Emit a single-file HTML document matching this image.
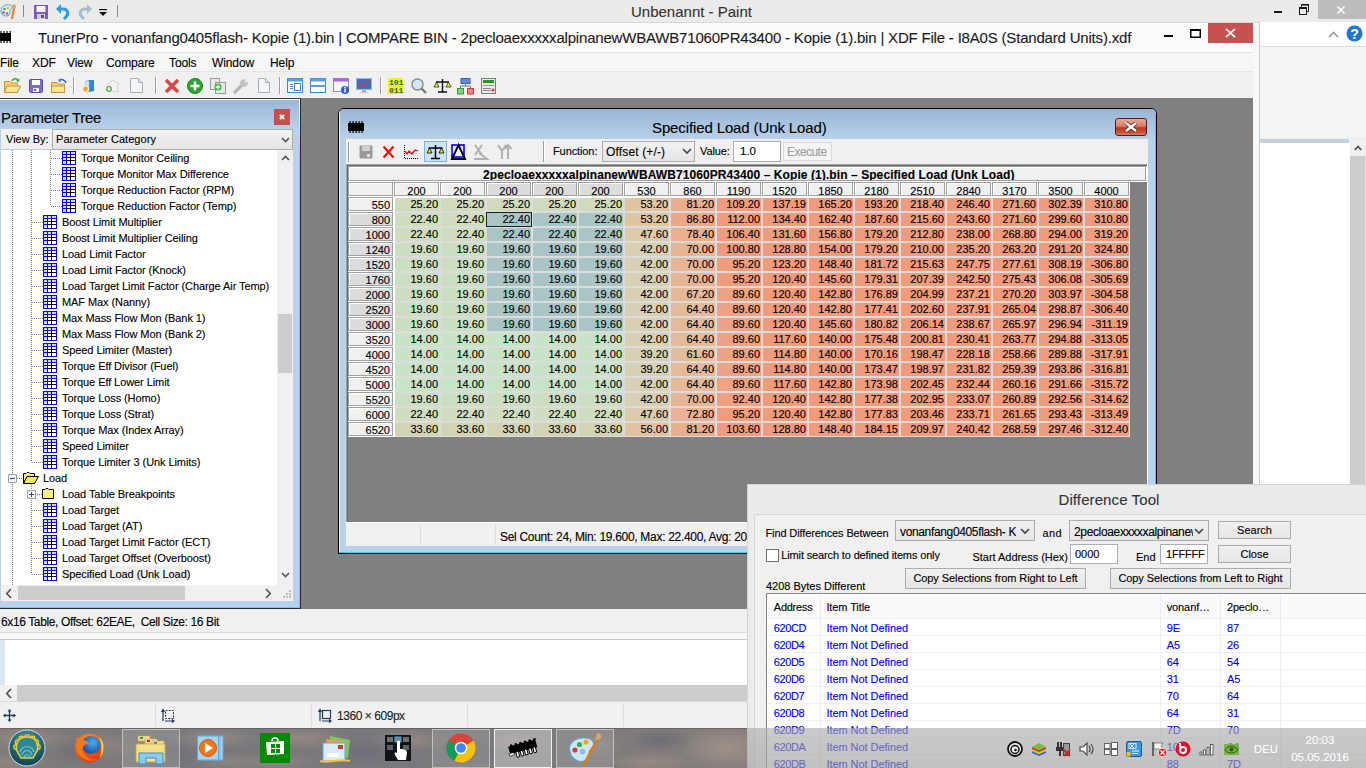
<!DOCTYPE html>
<html><head><meta charset="utf-8"><style>
html,body{margin:0;padding:0;width:1366px;height:768px;overflow:hidden;position:relative;background:#7d7775;font-family:"Liberation Sans",sans-serif;}
.a{position:absolute;}
.t{position:absolute;white-space:pre;line-height:1;-webkit-text-stroke:0.12px currentColor;}
svg{position:absolute;overflow:visible;}

</style></head><body>
<!-- paint -->
<div class="a" style="left:0px;top:0px;width:1366px;height:728px;background:#f0f0f0"></div><div class="a" style="left:0px;top:0px;width:1366px;height:22px;background:#ebebeb"></div><svg class="a" style="left:0px;top:2px;" width="17" height="17" viewBox="0 0 17 17">
      <path d="M1 9 C1 4 6 2 10 3 C13 4 12 7 10 8 C9 9 11 11 9 13 C7 15 1 14 1 9Z" fill="#dfeefa" stroke="#5a9fd4" stroke-width="1"/>
      <circle cx="4.5" cy="7" r="1.3" fill="#3fae49"/><circle cx="8" cy="6" r="1.3" fill="#f4b400"/>
      <circle cx="3.5" cy="10.5" r="1.3" fill="#e53935"/><circle cx="7" cy="11.5" r="1.2" fill="#3b7dd8"/>
      <path d="M12 17 L14 6" stroke="#e87b1f" stroke-width="2"/><circle cx="14" cy="4.5" r="2" fill="#d4a373"/></svg><div class="a" style="left:23px;top:5px;width:1px;height:12px;background:#8a8a8a"></div><svg class="a" style="left:34px;top:5px;" width="14" height="14" viewBox="0 0 14 14"><rect x="0" y="0" width="14" height="14" fill="#7b5bb5"/>
      <rect x="2.5" y="1" width="9" height="6" fill="#f4f4f8"/><rect x="3" y="9" width="8" height="5" fill="#d0d0d8"/><rect x="7" y="10" width="3" height="3" fill="#555"/></svg><svg class="a" style="left:56px;top:4px;" width="15" height="15" viewBox="0 0 15 15"><path d="M2 5 L7 5 C12 5 13 10 10 13 L8 15" fill="none" stroke="#2f9be3" stroke-width="3"/><path d="M0 5 L5 0 L5 10Z" fill="#2f9be3"/></svg><svg class="a" style="left:77px;top:4px;" width="15" height="15" viewBox="0 0 15 15"><path d="M13 5 L8 5 C3 5 2 10 5 13 L7 15" fill="none" stroke="#a9bccf" stroke-width="3"/><path d="M15 5 L10 0 L10 10Z" fill="#a9bccf"/></svg><svg class="a" style="left:99px;top:9px;" width="9" height="7" viewBox="0 0 9 7"><rect x="0" y="0" width="8" height="1.2" fill="#111"/><path d="M0 3 L8 3 L4 7Z" fill="#111"/></svg><div class="a" style="left:117px;top:5px;width:1px;height:12px;background:#8a8a8a"></div><div class="t" style="left:631px;top:4.30px;font-size:15px;color:#333;">Unbenannt - Paint</div><div class="a" style="left:1274px;top:11px;width:8px;height:2px;background:#1a1a1a"></div><svg class="a" style="left:1299px;top:4px;" width="10" height="11" viewBox="0 0 10 11"><rect x="0.5" y="3.5" width="7" height="7" fill="none" stroke="#1a1a1a"/><rect x="0" y="3" width="8" height="2" fill="#1a1a1a"/><path d="M2.5 3 V0.5 H9.5 V7.5 H8" fill="none" stroke="#1a1a1a"/><rect x="2" y="0" width="8" height="1.6" fill="#1a1a1a"/></svg><div class="a" style="left:1318px;top:0px;width:48px;height:19px;background:#bcbcbc"></div><svg class="a" style="left:1337px;top:6px;" width="8" height="8" viewBox="0 0 8 8"><path d="M0.5 0.5 L7.5 7.5 M7.5 0.5 L0.5 7.5" stroke="#fff" stroke-width="1.5"/></svg><div class="a" style="left:1260px;top:22px;width:106px;height:24px;background:#fff"></div><svg class="a" style="left:1328px;top:31px;" width="11" height="7" viewBox="0 0 11 7"><path d="M1 6 L5.5 1.5 L10 6" fill="none" stroke="#9a9a9a" stroke-width="1.6"/></svg><svg class="a" style="left:1346px;top:25px;" width="17" height="17" viewBox="0 0 17 17"><circle cx="8.5" cy="8.5" r="8" fill="#1e78d0"/><text x="8.5" y="13.5" font-size="14" font-weight="bold" text-anchor="middle" fill="#fff" font-family="Liberation Sans">?</text></svg><div class="a" style="left:1260px;top:46px;width:106px;height:1px;background:#dadbdc"></div><div class="a" style="left:1260px;top:47px;width:106px;height:91px;background:#f3f4f6"></div><div class="a" style="left:1260px;top:139px;width:89px;height:5px;background:#c5d0e0"></div><div class="a" style="left:1260px;top:143px;width:90px;height:489px;background:#fff"></div><div class="a" style="left:1350px;top:138px;width:16px;height:494px;background:#e8e8e8"></div><div class="a" style="left:1350px;top:139px;width:16px;height:17px;background:#f0f0f0"></div><svg class="a" style="left:1354px;top:145px;" width="8" height="6" viewBox="0 0 8 6"><path d="M0.8 5 L4 1.5 L7.2 5" fill="none" stroke="#505050" stroke-width="1.8"/></svg><div class="a" style="left:1350px;top:156px;width:15px;height:476px;background:#cdcdcd"></div><div class="a" style="left:0px;top:640px;width:1366px;height:45px;background:#fff"></div><div class="a" style="left:0px;top:640px;width:5px;height:45px;background:#dbe5f1"></div><div class="a" style="left:0px;top:685px;width:1366px;height:16px;background:#cdcdcd"></div><div class="a" style="left:0px;top:685px;width:17px;height:16px;background:#f0f0f0"></div><svg class="a" style="left:5px;top:688px;" width="8" height="11" viewBox="0 0 8 11"><path d="M6 1 L1.8 5.5 L6 10" fill="none" stroke="#555" stroke-width="1.8"/></svg><div class="a" style="left:0px;top:701px;width:1366px;height:27px;background:#f0f0f0"></div><div class="a" style="left:0px;top:701px;width:1366px;height:1px;background:#d9d9d9"></div><div class="a" style="left:155px;top:704px;width:1px;height:23px;background:#dcdcdc"></div><div class="a" style="left:311px;top:704px;width:1px;height:23px;background:#dcdcdc"></div><div class="a" style="left:467px;top:704px;width:1px;height:23px;background:#dcdcdc"></div><div class="a" style="left:623px;top:704px;width:1px;height:23px;background:#dcdcdc"></div><svg class="a" style="left:3px;top:709px;" width="13" height="13" viewBox="0 0 13 13"><path d="M6.5 1 V12 M1 6.5 H12" stroke="#1e3a5f" stroke-width="1.3"/><path d="M6.5 0 L4.5 2.5 H8.5Z M6.5 13 L4.5 10.5 H8.5Z M0 6.5 L2.5 4.5 V8.5Z M13 6.5 L10.5 4.5 V8.5Z" fill="#1e3a5f"/></svg><svg class="a" style="left:161px;top:709px;" width="14" height="13" viewBox="0 0 14 13"><path d="M2 12 V1 M0.5 3 L2 0.5 L3.5 3" stroke="#1e3a5f" stroke-width="1.2" fill="none"/><rect x="4.5" y="1.5" width="8" height="8" fill="none" stroke="#1e3a5f" stroke-dasharray="2 1.2"/><path d="M4 12 H13 M11 10.5 L13 12 L11 13.5" stroke="#1e3a5f" stroke-width="1.2" fill="none"/></svg><svg class="a" style="left:318px;top:709px;" width="14" height="13" viewBox="0 0 14 13"><path d="M2 12 V1 M0.5 3 L2 0.5 L3.5 3" stroke="#1e3a5f" stroke-width="1.2" fill="none"/><rect x="4.5" y="1.5" width="8" height="8" fill="none" stroke="#1e3a5f" stroke-width="1.2"/><path d="M4 12 H13 M11 10.5 L13 12 L11 13.5" stroke="#1e3a5f" stroke-width="1.2" fill="none"/></svg><div class="t" style="left:337px;top:709.84px;font-size:12px;color:#1e1e1e;letter-spacing:-0.45px">1360 × 609px</div>
<!-- tunerpro -->
<div class="a" style="left:0px;top:22px;width:1260px;height:618px;background:#f8f8f8;border-right:1px solid #c8c8c8;border-bottom:1px solid #c8c8c8;box-sizing:border-box"></div><div class="a" style="left:0px;top:22px;width:1253px;height:30px;background:#fcfcfc"></div><div class="a" style="left:0px;top:22px;width:1260px;height:1px;background:#d6d6d6"></div><svg class="a" style="left:0px;top:31px;" width="11" height="12" viewBox="0 0 11 12"><rect x="0" y="2" width="11" height="8" fill="#000"/><rect x="0.5" y="0" width="1.2" height="12" fill="#000"/><rect x="3.5" y="0" width="1.2" height="12" fill="#000"/><rect x="6.5" y="0" width="1.2" height="12" fill="#000"/><rect x="9.5" y="0" width="1.2" height="12" fill="#000"/></svg><div class="t" style="left:38px;top:30.30px;font-size:15px;color:#1b1b1b;letter-spacing:-0.19px">TunerPro - vonanfang0405flash- Kopie (1).bin | COMPARE BIN - 2pecloaexxxxxalpinanewWBAWB71060PR43400 - Kopie (1).bin | XDF File - I8A0S (Standard Units).xdf</div><div class="a" style="left:1164px;top:35px;width:9px;height:2px;background:#000"></div><svg class="a" style="left:1190px;top:29px;" width="11" height="9" viewBox="0 0 11 9"><rect x="0.75" y="0.75" width="9.5" height="7.5" fill="none" stroke="#000" stroke-width="1.5"/><rect x="0" y="0" width="11" height="2" fill="#000"/></svg><div class="a" style="left:1208px;top:23px;width:45px;height:20px;background:#c75050"></div><svg class="a" style="left:1225px;top:28px;" width="11" height="10" viewBox="0 0 11 10"><path d="M1 0.8 L10 9.2 M10 0.8 L1 9.2" stroke="#fff" stroke-width="1.7"/></svg><div class="a" style="left:0px;top:52px;width:1253px;height:19px;background:#f5f6f7;border-top:1px solid #e3e3e3;box-sizing:border-box"></div><div class="t" style="left:0px;top:56.84px;font-size:12px;color:#000;letter-spacing:-0.1px">File</div><div class="t" style="left:32px;top:56.84px;font-size:12px;color:#000;letter-spacing:-0.1px">XDF</div><div class="t" style="left:67px;top:56.84px;font-size:12px;color:#000;letter-spacing:-0.1px">View</div><div class="t" style="left:106px;top:56.84px;font-size:12px;color:#000;letter-spacing:-0.1px">Compare</div><div class="t" style="left:169px;top:56.84px;font-size:12px;color:#000;letter-spacing:-0.1px">Tools</div><div class="t" style="left:212px;top:56.84px;font-size:12px;color:#000;letter-spacing:-0.1px">Window</div><div class="t" style="left:270px;top:56.84px;font-size:12px;color:#000;letter-spacing:-0.1px">Help</div><div class="a" style="left:0px;top:71px;width:1253px;height:27px;background:#f0f0f0"></div><div class="a" style="left:0px;top:71px;width:1253px;height:1px;background:#e6e6e6"></div><div class="a" style="left:73px;top:77px;width:1px;height:17px;background:#a0a0a0"></div><div class="a" style="left:74px;top:77px;width:1px;height:17px;background:#fff"></div><div class="a" style="left:155px;top:77px;width:1px;height:17px;background:#a0a0a0"></div><div class="a" style="left:156px;top:77px;width:1px;height:17px;background:#fff"></div><div class="a" style="left:279px;top:77px;width:1px;height:17px;background:#a0a0a0"></div><div class="a" style="left:280px;top:77px;width:1px;height:17px;background:#fff"></div><div class="a" style="left:380px;top:77px;width:1px;height:17px;background:#a0a0a0"></div><div class="a" style="left:381px;top:77px;width:1px;height:17px;background:#fff"></div><svg class="a" style="left:4px;top:78px;" width="17" height="15" viewBox="0 0 17 15"><path d="M0.5 3.5 H6 L7.5 5 H13.5 V14.5 H0.5Z" fill="#f3d27a" stroke="#c9933a"/><path d="M0.5 14.5 L3 8 H16.5 L13.5 14.5Z" fill="#fbe39b" stroke="#c9933a"/><path d="M8 3 C9 0 13 0 14 2.5" fill="none" stroke="#3aa53a" stroke-width="1.6"/><path d="M15.5 0.5 L15 4 L12 3Z" fill="#3aa53a"/></svg><svg class="a" style="left:29px;top:79px;" width="14" height="14" viewBox="0 0 14 14"><rect x="0.5" y="0.5" width="13" height="13" rx="1" fill="#7d6dc9" stroke="#5b4aa5"/><rect x="3" y="1" width="8" height="5" fill="#fafafa"/><rect x="4" y="9" width="6" height="4" fill="#eee"/><rect x="5" y="10" width="2" height="2" fill="#666"/></svg><svg class="a" style="left:51px;top:78px;" width="17" height="15" viewBox="0 0 17 15"><path d="M0.5 4.5 H6 L7.5 6 H13.5 V14.5 H0.5Z" fill="#f3d27a" stroke="#c9933a"/><path d="M0.5 14.5 V8 H13.5 V14.5Z" fill="#fbe39b" stroke="#c9933a"/><path d="M15 5 C14 2 11 1 9 2" fill="none" stroke="#3a66c8" stroke-width="1.5"/><path d="M8 0 L10 4 L7.5 3.5Z" fill="#3a66c8"/></svg><svg class="a" style="left:82px;top:79px;" width="15" height="14" viewBox="0 0 15 14"><path d="M5 1 H12 V12 L7 13 V2Z" fill="#2e86d6"/><path d="M4 2 H7 V13 H4Z" fill="#dfe9f3" stroke="#9fb5cc" stroke-width="0.8"/><circle cx="3.5" cy="10" r="3" fill="#f6a623" stroke="#fff" stroke-width="0.8"/></svg><svg class="a" style="left:105px;top:79px;" width="15" height="14" viewBox="0 0 15 14"><path d="M3 5 L8 1 L14 5 L12 9 L14 12 L9 13 L3 9Z" fill="#f2f2f2" stroke="#cfcfcf"/><circle cx="4" cy="10" r="3" fill="#4bb84b"/><path d="M2 10 H6 M4 8 V12" stroke="#fff" stroke-width="1.2"/></svg><svg class="a" style="left:130px;top:78px;" width="13" height="15" viewBox="0 0 13 15"><path d="M0.5 0.5 H8.5 L12.5 4.5 V14.5 H0.5Z" fill="#f3f6fb" stroke="#a7adb8"/><path d="M8.5 0.5 V4.5 H12.5" fill="#dde3ec" stroke="#a7adb8"/></svg><svg class="a" style="left:164px;top:78px;" width="16" height="16" viewBox="0 0 16 16"><path d="M2 2 L14 14 M14 2 L2 14" stroke="#d9474a" stroke-width="3.6"/></svg><svg class="a" style="left:187px;top:78px;" width="16" height="16" viewBox="0 0 16 16"><circle cx="8" cy="8" r="7.5" fill="#2ea52e" stroke="#1c7d1c"/><path d="M3.5 8 H12.5 M8 3.5 V12.5" stroke="#fff" stroke-width="2.6"/></svg><svg class="a" style="left:210px;top:78px;" width="16" height="16" viewBox="0 0 16 16"><rect x="0.5" y="0.5" width="9" height="11" fill="#e8e8e8" stroke="#9a9a9a"/><rect x="5.5" y="4.5" width="10" height="11" fill="#e8e8e8" stroke="#9a9a9a"/><circle cx="8" cy="9" r="3.6" fill="#3db83d"/><path d="M5.8 9 H10.2 M8 6.8 V11.2" stroke="#fff" stroke-width="1.3"/></svg><svg class="a" style="left:233px;top:78px;" width="16" height="16" viewBox="0 0 16 16"><path d="M2 14 L9 7" stroke="#b5b5b5" stroke-width="3.2" stroke-linecap="round"/><circle cx="11" cy="5" r="3.8" fill="#c2c2c2"/><path d="M11 5 L14 0 L16 3Z" fill="#f0f0f0"/></svg><svg class="a" style="left:258px;top:78px;" width="12" height="15" viewBox="0 0 12 15"><path d="M0.5 0.5 H7.5 L11.5 4.5 V14.5 H0.5Z" fill="#f3f6fb" stroke="#a7adb8"/><path d="M7.5 0.5 V4.5 H11.5" fill="#dde3ec" stroke="#a7adb8"/></svg><svg class="a" style="left:287px;top:78px;" width="16" height="15" viewBox="0 0 16 15"><rect x="0.5" y="0.5" width="15" height="14" fill="#fff" stroke="#3d86cf"/><rect x="0.5" y="0.5" width="15" height="3" fill="#5aa0e0"/><rect x="3" y="6" width="3" height="1" fill="#3d86cf"/><rect x="3" y="8" width="3" height="1" fill="#3d86cf"/><rect x="3" y="10" width="3" height="1" fill="#3d86cf"/><rect x="7.5" y="5.5" width="6" height="7" fill="none" stroke="#3d86cf"/></svg><svg class="a" style="left:310px;top:78px;" width="16" height="15" viewBox="0 0 16 15"><rect x="0.5" y="0.5" width="15" height="14" fill="#fff" stroke="#3d86cf"/><rect x="0.5" y="0.5" width="15" height="3" fill="#5aa0e0"/><rect x="0.5" y="7" width="15" height="2" fill="#5aa0e0"/></svg><svg class="a" style="left:333px;top:78px;" width="17" height="16" viewBox="0 0 17 16"><rect x="0.5" y="0.5" width="15" height="13" fill="#f5f5fb" stroke="#8f8fa6"/><rect x="0.5" y="0.5" width="15" height="3" fill="#a36ae0"/><circle cx="12" cy="12" r="4" fill="#2c5fc9"/><rect x="11.3" y="10.5" width="1.5" height="4" fill="#fff"/><rect x="11.3" y="8.8" width="1.5" height="1.2" fill="#fff"/></svg><svg class="a" style="left:356px;top:78px;" width="16" height="16" viewBox="0 0 16 16"><rect x="0.5" y="0.5" width="15" height="11" fill="#3b6fc4" stroke="#9fb8d8"/><path d="M2 9 L6 6 L8 7 L13 3" stroke="#e53030" stroke-width="1.5" fill="none"/><rect x="6" y="12" width="4" height="2" fill="#aaa"/><rect x="4" y="14" width="8" height="1.2" fill="#ccc"/></svg><svg class="a" style="left:388px;top:78px;" width="16" height="16" viewBox="0 0 16 16"><rect x="0" y="0" width="15" height="16" fill="#f7ef1d"/><text x="1" y="7" font-size="8" font-weight="bold" fill="#1a6b5a" font-family="Liberation Mono">101</text><text x="1" y="15" font-size="8" font-weight="bold" fill="#1a6b5a" font-family="Liberation Mono">011</text></svg><svg class="a" style="left:411px;top:78px;" width="16" height="16" viewBox="0 0 16 16"><circle cx="6.5" cy="6.5" r="5.5" fill="#cfe8f7" stroke="#8a8a8a" stroke-width="1.4"/><path d="M10.5 10.5 L15 15" stroke="#7a7a7a" stroke-width="2.4"/></svg><svg class="a" style="left:434px;top:78px;" width="17" height="16" viewBox="0 0 17 16"><path d="M8.5 1 V14 M4 14 H13 M2 4 H15" stroke="#111" stroke-width="1.4"/><path d="M0 9 L2.5 4 L5 9Z" fill="#f0e040" stroke="#111" stroke-width="0.7"/><path d="M12 9 L14.5 4 L17 9Z" fill="#f0e040" stroke="#111" stroke-width="0.7"/></svg><svg class="a" style="left:457px;top:78px;" width="17" height="17" viewBox="0 0 17 17"><rect x="4" y="0.5" width="9" height="5" fill="#5b8de6" stroke="#3a5fb0"/><path d="M8.5 5.5 V8 M3.5 8 H13.5 M3.5 8 V10 M13.5 8 V10" stroke="#777" fill="none"/><rect x="0.5" y="10.5" width="6" height="5.5" fill="#7cd67c" stroke="#3c9c3c"/><rect x="10.5" y="10.5" width="6" height="5.5" fill="#f08080" stroke="#c04040"/></svg><svg class="a" style="left:481px;top:78px;" width="16" height="16" viewBox="0 0 16 16"><rect x="0.5" y="0.5" width="14" height="15" fill="#e9e9e9" stroke="#7a7a7a"/><rect x="2" y="2" width="11" height="3" fill="#2d8b3a"/><rect x="2" y="7" width="11" height="1" fill="#d48a2a"/><rect x="2" y="10" width="8" height="1" fill="#888"/><rect x="2" y="12" width="8" height="1" fill="#888"/><circle cx="12" cy="12" r="1.5" fill="#d33"/></svg><div class="a" style="left:0px;top:98px;width:1253px;height:511px;background:#808080"></div><div class="a" style="left:0px;top:609px;width:1253px;height:23px;background:#f0f0f0"></div><div class="a" style="left:0px;top:632px;width:1253px;height:1px;background:#dcdcdc"></div><div class="t" style="left:1px;top:615.84px;font-size:12px;color:#000;letter-spacing:-0.38px">6x16 Table, Offset: 62EAE,  Cell Size: 16 Bit</div>
<!-- tree -->
<div class="a" style="left:0px;top:98px;width:301px;height:511px;background:#b9d1ea"></div><div class="a" style="left:0px;top:98px;width:301px;height:1px;background:#3c3c3c"></div><div class="a" style="left:300px;top:98px;width:1px;height:511px;background:#2a2a2a"></div><div class="a" style="left:0px;top:608px;width:301px;height:1px;background:#2a2a2a"></div><div class="a" style="left:299px;top:99px;width:1px;height:509px;background:linear-gradient(#ffffff,#5ad4f4 60px,#5ad4f4)"></div><div class="a" style="left:0px;top:607px;width:300px;height:1px;background:#5ad4f4"></div><div class="a" style="left:0px;top:99px;width:299px;height:30px;background:linear-gradient(#9ab6d5,#b9d1ea)"></div><div class="a" style="left:0px;top:99px;width:299px;height:1px;background:#fff"></div><div class="t" style="left:1px;top:109.80px;font-size:15px;color:#000;letter-spacing:-0.3px">Parameter Tree</div><div class="a" style="left:274px;top:109px;width:16px;height:16px;background:#c84f4f"></div><svg class="a" style="left:279px;top:114px;" width="6" height="6" viewBox="0 0 6 6"><path d="M0.8 0.8 L5.2 5.2 M5.2 0.8 L0.8 5.2" stroke="#fff" stroke-width="1.7"/></svg><div class="a" style="left:1px;top:129px;width:51px;height:20px;background:#f0f0f0"></div><div class="t" style="left:6px;top:133.69px;font-size:11px;color:#000;letter-spacing:0px">View By:</div><div class="a" style="left:52px;top:129px;width:241px;height:21px;background:linear-gradient(#f2f2f2,#e5e5e5);border:1px solid #acacac;box-sizing:border-box"></div><div class="t" style="left:56px;top:134.19px;font-size:11px;color:#000;letter-spacing:0.05px">Parameter Category</div><svg class="a" style="left:281px;top:137px;" width="9" height="6" viewBox="0 0 9 6"><path d="M1 1 L4.5 4.5 L8 1" fill="none" stroke="#555" stroke-width="1.6"/></svg><div class="a" style="left:1px;top:150px;width:276px;height:435px;background:#fff"></div><div class="a" style="left:12px;top:150px;width:1px;height:435px;background-image:linear-gradient(#808080 50%,transparent 50%);background-size:1px 2px"></div><div class="a" style="left:31px;top:150px;width:1px;height:312px;background-image:linear-gradient(#808080 50%,transparent 50%);background-size:1px 2px"></div><div class="a" style="left:31px;top:484px;width:1px;height:90px;background-image:linear-gradient(#808080 50%,transparent 50%);background-size:1px 2px"></div><div class="a" style="left:50px;top:150px;width:1px;height:56px;background-image:linear-gradient(#808080 50%,transparent 50%);background-size:1px 2px"></div><div class="a" style="left:51px;top:158px;width:11px;height:1px;background-image:linear-gradient(90deg,#808080 50%,transparent 50%);background-size:2px 1px"></div><svg class="a" style="left:62px;top:151px;" width="14" height="14" viewBox="0 0 14 14"><g shape-rendering="crispEdges"><rect x="0" y="0" width="14" height="14" fill="#0000ff"/><rect x="1" y="1" width="3" height="2" fill="#d4d1c4"/><rect x="5" y="1" width="3" height="2" fill="#d4d1c4"/><rect x="9" y="1" width="4" height="2" fill="#d4d1c4"/><rect x="1" y="4" width="3" height="2" fill="#d4d1c4"/><rect x="1" y="7" width="3" height="2" fill="#d4d1c4"/><rect x="1" y="10" width="3" height="3" fill="#d4d1c4"/><rect x="5" y="4" width="8" height="9" fill="#fff"/><rect x="8" y="4" width="1" height="9" fill="#000"/><rect x="5" y="6" width="8" height="1" fill="#000"/><rect x="5" y="9" width="8" height="1" fill="#000"/></g></svg><div class="t" style="left:81px;top:152.69px;font-size:11px;color:#000;letter-spacing:-0.08px">Torque Monitor Ceiling</div><div class="a" style="left:51px;top:174px;width:11px;height:1px;background-image:linear-gradient(90deg,#808080 50%,transparent 50%);background-size:2px 1px"></div><svg class="a" style="left:62px;top:167px;" width="14" height="14" viewBox="0 0 14 14"><g shape-rendering="crispEdges"><rect x="0" y="0" width="14" height="14" fill="#0000ff"/><rect x="1" y="1" width="3" height="2" fill="#d4d1c4"/><rect x="5" y="1" width="3" height="2" fill="#d4d1c4"/><rect x="9" y="1" width="4" height="2" fill="#d4d1c4"/><rect x="1" y="4" width="3" height="2" fill="#d4d1c4"/><rect x="1" y="7" width="3" height="2" fill="#d4d1c4"/><rect x="1" y="10" width="3" height="3" fill="#d4d1c4"/><rect x="5" y="4" width="8" height="9" fill="#fff"/><rect x="8" y="4" width="1" height="9" fill="#000"/><rect x="5" y="6" width="8" height="1" fill="#000"/><rect x="5" y="9" width="8" height="1" fill="#000"/></g></svg><div class="t" style="left:81px;top:168.69px;font-size:11px;color:#000;letter-spacing:-0.08px">Torque Monitor Max Difference</div><div class="a" style="left:51px;top:190px;width:11px;height:1px;background-image:linear-gradient(90deg,#808080 50%,transparent 50%);background-size:2px 1px"></div><svg class="a" style="left:62px;top:183px;" width="14" height="14" viewBox="0 0 14 14"><g shape-rendering="crispEdges"><rect x="0" y="0" width="14" height="14" fill="#0000ff"/><rect x="1" y="1" width="3" height="2" fill="#d4d1c4"/><rect x="5" y="1" width="3" height="2" fill="#d4d1c4"/><rect x="9" y="1" width="4" height="2" fill="#d4d1c4"/><rect x="1" y="4" width="3" height="2" fill="#d4d1c4"/><rect x="1" y="7" width="3" height="2" fill="#d4d1c4"/><rect x="1" y="10" width="3" height="3" fill="#d4d1c4"/><rect x="5" y="4" width="8" height="9" fill="#fff"/><rect x="8" y="4" width="1" height="9" fill="#000"/><rect x="5" y="6" width="8" height="1" fill="#000"/><rect x="5" y="9" width="8" height="1" fill="#000"/></g></svg><div class="t" style="left:81px;top:184.69px;font-size:11px;color:#000;letter-spacing:-0.08px">Torque Reduction Factor (RPM)</div><div class="a" style="left:51px;top:206px;width:11px;height:1px;background-image:linear-gradient(90deg,#808080 50%,transparent 50%);background-size:2px 1px"></div><svg class="a" style="left:62px;top:199px;" width="14" height="14" viewBox="0 0 14 14"><g shape-rendering="crispEdges"><rect x="0" y="0" width="14" height="14" fill="#0000ff"/><rect x="1" y="1" width="3" height="2" fill="#d4d1c4"/><rect x="5" y="1" width="3" height="2" fill="#d4d1c4"/><rect x="9" y="1" width="4" height="2" fill="#d4d1c4"/><rect x="1" y="4" width="3" height="2" fill="#d4d1c4"/><rect x="1" y="7" width="3" height="2" fill="#d4d1c4"/><rect x="1" y="10" width="3" height="3" fill="#d4d1c4"/><rect x="5" y="4" width="8" height="9" fill="#fff"/><rect x="8" y="4" width="1" height="9" fill="#000"/><rect x="5" y="6" width="8" height="1" fill="#000"/><rect x="5" y="9" width="8" height="1" fill="#000"/></g></svg><div class="t" style="left:81px;top:200.69px;font-size:11px;color:#000;letter-spacing:-0.08px">Torque Reduction Factor (Temp)</div><div class="a" style="left:32px;top:222px;width:11px;height:1px;background-image:linear-gradient(90deg,#808080 50%,transparent 50%);background-size:2px 1px"></div><svg class="a" style="left:43px;top:215px;" width="14" height="14" viewBox="0 0 14 14"><g shape-rendering="crispEdges"><rect x="0" y="0" width="14" height="14" fill="#0000ff"/><rect x="1" y="1" width="3" height="2" fill="#d4d1c4"/><rect x="5" y="1" width="3" height="2" fill="#d4d1c4"/><rect x="9" y="1" width="4" height="2" fill="#d4d1c4"/><rect x="1" y="4" width="3" height="2" fill="#d4d1c4"/><rect x="1" y="7" width="3" height="2" fill="#d4d1c4"/><rect x="1" y="10" width="3" height="3" fill="#d4d1c4"/><rect x="5" y="4" width="8" height="9" fill="#fff"/><rect x="8" y="4" width="1" height="9" fill="#000"/><rect x="5" y="6" width="8" height="1" fill="#000"/><rect x="5" y="9" width="8" height="1" fill="#000"/></g></svg><div class="t" style="left:62px;top:216.69px;font-size:11px;color:#000;letter-spacing:-0.08px">Boost Limit Multiplier</div><div class="a" style="left:32px;top:238px;width:11px;height:1px;background-image:linear-gradient(90deg,#808080 50%,transparent 50%);background-size:2px 1px"></div><svg class="a" style="left:43px;top:231px;" width="14" height="14" viewBox="0 0 14 14"><g shape-rendering="crispEdges"><rect x="0" y="0" width="14" height="14" fill="#0000ff"/><rect x="1" y="1" width="3" height="2" fill="#d4d1c4"/><rect x="5" y="1" width="3" height="2" fill="#d4d1c4"/><rect x="9" y="1" width="4" height="2" fill="#d4d1c4"/><rect x="1" y="4" width="3" height="2" fill="#d4d1c4"/><rect x="1" y="7" width="3" height="2" fill="#d4d1c4"/><rect x="1" y="10" width="3" height="3" fill="#d4d1c4"/><rect x="5" y="4" width="8" height="9" fill="#fff"/><rect x="8" y="4" width="1" height="9" fill="#000"/><rect x="5" y="6" width="8" height="1" fill="#000"/><rect x="5" y="9" width="8" height="1" fill="#000"/></g></svg><div class="t" style="left:62px;top:232.69px;font-size:11px;color:#000;letter-spacing:-0.08px">Boost Limit Multiplier Ceiling</div><div class="a" style="left:32px;top:254px;width:11px;height:1px;background-image:linear-gradient(90deg,#808080 50%,transparent 50%);background-size:2px 1px"></div><svg class="a" style="left:43px;top:247px;" width="14" height="14" viewBox="0 0 14 14"><g shape-rendering="crispEdges"><rect x="0" y="0" width="14" height="14" fill="#0000ff"/><rect x="1" y="1" width="3" height="2" fill="#d4d1c4"/><rect x="5" y="1" width="3" height="2" fill="#d4d1c4"/><rect x="9" y="1" width="4" height="2" fill="#d4d1c4"/><rect x="1" y="4" width="3" height="2" fill="#d4d1c4"/><rect x="1" y="7" width="3" height="2" fill="#d4d1c4"/><rect x="1" y="10" width="3" height="3" fill="#d4d1c4"/><rect x="5" y="4" width="8" height="9" fill="#fff"/><rect x="8" y="4" width="1" height="9" fill="#000"/><rect x="5" y="6" width="8" height="1" fill="#000"/><rect x="5" y="9" width="8" height="1" fill="#000"/></g></svg><div class="t" style="left:62px;top:248.69px;font-size:11px;color:#000;letter-spacing:-0.08px">Load Limit Factor</div><div class="a" style="left:32px;top:270px;width:11px;height:1px;background-image:linear-gradient(90deg,#808080 50%,transparent 50%);background-size:2px 1px"></div><svg class="a" style="left:43px;top:263px;" width="14" height="14" viewBox="0 0 14 14"><g shape-rendering="crispEdges"><rect x="0" y="0" width="14" height="14" fill="#0000ff"/><rect x="1" y="1" width="3" height="2" fill="#d4d1c4"/><rect x="5" y="1" width="3" height="2" fill="#d4d1c4"/><rect x="9" y="1" width="4" height="2" fill="#d4d1c4"/><rect x="1" y="4" width="3" height="2" fill="#d4d1c4"/><rect x="1" y="7" width="3" height="2" fill="#d4d1c4"/><rect x="1" y="10" width="3" height="3" fill="#d4d1c4"/><rect x="5" y="4" width="8" height="9" fill="#fff"/><rect x="8" y="4" width="1" height="9" fill="#000"/><rect x="5" y="6" width="8" height="1" fill="#000"/><rect x="5" y="9" width="8" height="1" fill="#000"/></g></svg><div class="t" style="left:62px;top:264.69px;font-size:11px;color:#000;letter-spacing:-0.08px">Load Limit Factor (Knock)</div><div class="a" style="left:32px;top:286px;width:11px;height:1px;background-image:linear-gradient(90deg,#808080 50%,transparent 50%);background-size:2px 1px"></div><svg class="a" style="left:43px;top:279px;" width="14" height="14" viewBox="0 0 14 14"><g shape-rendering="crispEdges"><rect x="0" y="0" width="14" height="14" fill="#0000ff"/><rect x="1" y="1" width="3" height="2" fill="#d4d1c4"/><rect x="5" y="1" width="3" height="2" fill="#d4d1c4"/><rect x="9" y="1" width="4" height="2" fill="#d4d1c4"/><rect x="1" y="4" width="3" height="2" fill="#d4d1c4"/><rect x="1" y="7" width="3" height="2" fill="#d4d1c4"/><rect x="1" y="10" width="3" height="3" fill="#d4d1c4"/><rect x="5" y="4" width="8" height="9" fill="#fff"/><rect x="8" y="4" width="1" height="9" fill="#000"/><rect x="5" y="6" width="8" height="1" fill="#000"/><rect x="5" y="9" width="8" height="1" fill="#000"/></g></svg><div class="t" style="left:62px;top:280.69px;font-size:11px;color:#000;letter-spacing:-0.08px">Load Target Limit Factor (Charge Air Temp)</div><div class="a" style="left:32px;top:302px;width:11px;height:1px;background-image:linear-gradient(90deg,#808080 50%,transparent 50%);background-size:2px 1px"></div><svg class="a" style="left:43px;top:295px;" width="14" height="14" viewBox="0 0 14 14"><g shape-rendering="crispEdges"><rect x="0" y="0" width="14" height="14" fill="#0000ff"/><rect x="1" y="1" width="3" height="2" fill="#d4d1c4"/><rect x="5" y="1" width="3" height="2" fill="#d4d1c4"/><rect x="9" y="1" width="4" height="2" fill="#d4d1c4"/><rect x="1" y="4" width="3" height="2" fill="#d4d1c4"/><rect x="1" y="7" width="3" height="2" fill="#d4d1c4"/><rect x="1" y="10" width="3" height="3" fill="#d4d1c4"/><rect x="5" y="4" width="8" height="9" fill="#fff"/><rect x="8" y="4" width="1" height="9" fill="#000"/><rect x="5" y="6" width="8" height="1" fill="#000"/><rect x="5" y="9" width="8" height="1" fill="#000"/></g></svg><div class="t" style="left:62px;top:296.69px;font-size:11px;color:#000;letter-spacing:-0.08px">MAF Max (Nanny)</div><div class="a" style="left:32px;top:318px;width:11px;height:1px;background-image:linear-gradient(90deg,#808080 50%,transparent 50%);background-size:2px 1px"></div><svg class="a" style="left:43px;top:311px;" width="14" height="14" viewBox="0 0 14 14"><g shape-rendering="crispEdges"><rect x="0" y="0" width="14" height="14" fill="#0000ff"/><rect x="1" y="1" width="3" height="2" fill="#d4d1c4"/><rect x="5" y="1" width="3" height="2" fill="#d4d1c4"/><rect x="9" y="1" width="4" height="2" fill="#d4d1c4"/><rect x="1" y="4" width="3" height="2" fill="#d4d1c4"/><rect x="1" y="7" width="3" height="2" fill="#d4d1c4"/><rect x="1" y="10" width="3" height="3" fill="#d4d1c4"/><rect x="5" y="4" width="8" height="9" fill="#fff"/><rect x="8" y="4" width="1" height="9" fill="#000"/><rect x="5" y="6" width="8" height="1" fill="#000"/><rect x="5" y="9" width="8" height="1" fill="#000"/></g></svg><div class="t" style="left:62px;top:312.69px;font-size:11px;color:#000;letter-spacing:-0.08px">Max Mass Flow Mon (Bank 1)</div><div class="a" style="left:32px;top:334px;width:11px;height:1px;background-image:linear-gradient(90deg,#808080 50%,transparent 50%);background-size:2px 1px"></div><svg class="a" style="left:43px;top:327px;" width="14" height="14" viewBox="0 0 14 14"><g shape-rendering="crispEdges"><rect x="0" y="0" width="14" height="14" fill="#0000ff"/><rect x="1" y="1" width="3" height="2" fill="#d4d1c4"/><rect x="5" y="1" width="3" height="2" fill="#d4d1c4"/><rect x="9" y="1" width="4" height="2" fill="#d4d1c4"/><rect x="1" y="4" width="3" height="2" fill="#d4d1c4"/><rect x="1" y="7" width="3" height="2" fill="#d4d1c4"/><rect x="1" y="10" width="3" height="3" fill="#d4d1c4"/><rect x="5" y="4" width="8" height="9" fill="#fff"/><rect x="8" y="4" width="1" height="9" fill="#000"/><rect x="5" y="6" width="8" height="1" fill="#000"/><rect x="5" y="9" width="8" height="1" fill="#000"/></g></svg><div class="t" style="left:62px;top:328.69px;font-size:11px;color:#000;letter-spacing:-0.08px">Max Mass Flow Mon (Bank 2)</div><div class="a" style="left:32px;top:350px;width:11px;height:1px;background-image:linear-gradient(90deg,#808080 50%,transparent 50%);background-size:2px 1px"></div><svg class="a" style="left:43px;top:343px;" width="14" height="14" viewBox="0 0 14 14"><g shape-rendering="crispEdges"><rect x="0" y="0" width="14" height="14" fill="#0000ff"/><rect x="1" y="1" width="3" height="2" fill="#d4d1c4"/><rect x="5" y="1" width="3" height="2" fill="#d4d1c4"/><rect x="9" y="1" width="4" height="2" fill="#d4d1c4"/><rect x="1" y="4" width="3" height="2" fill="#d4d1c4"/><rect x="1" y="7" width="3" height="2" fill="#d4d1c4"/><rect x="1" y="10" width="3" height="3" fill="#d4d1c4"/><rect x="5" y="4" width="8" height="9" fill="#fff"/><rect x="8" y="4" width="1" height="9" fill="#000"/><rect x="5" y="6" width="8" height="1" fill="#000"/><rect x="5" y="9" width="8" height="1" fill="#000"/></g></svg><div class="t" style="left:62px;top:344.69px;font-size:11px;color:#000;letter-spacing:-0.08px">Speed Limiter (Master)</div><div class="a" style="left:32px;top:366px;width:11px;height:1px;background-image:linear-gradient(90deg,#808080 50%,transparent 50%);background-size:2px 1px"></div><svg class="a" style="left:43px;top:359px;" width="14" height="14" viewBox="0 0 14 14"><g shape-rendering="crispEdges"><rect x="0" y="0" width="14" height="14" fill="#0000ff"/><rect x="1" y="1" width="3" height="2" fill="#d4d1c4"/><rect x="5" y="1" width="3" height="2" fill="#d4d1c4"/><rect x="9" y="1" width="4" height="2" fill="#d4d1c4"/><rect x="1" y="4" width="3" height="2" fill="#d4d1c4"/><rect x="1" y="7" width="3" height="2" fill="#d4d1c4"/><rect x="1" y="10" width="3" height="3" fill="#d4d1c4"/><rect x="5" y="4" width="8" height="9" fill="#fff"/><rect x="8" y="4" width="1" height="9" fill="#000"/><rect x="5" y="6" width="8" height="1" fill="#000"/><rect x="5" y="9" width="8" height="1" fill="#000"/></g></svg><div class="t" style="left:62px;top:360.69px;font-size:11px;color:#000;letter-spacing:-0.08px">Torque Eff Divisor (Fuel)</div><div class="a" style="left:32px;top:382px;width:11px;height:1px;background-image:linear-gradient(90deg,#808080 50%,transparent 50%);background-size:2px 1px"></div><svg class="a" style="left:43px;top:375px;" width="14" height="14" viewBox="0 0 14 14"><g shape-rendering="crispEdges"><rect x="0" y="0" width="14" height="14" fill="#0000ff"/><rect x="1" y="1" width="3" height="2" fill="#d4d1c4"/><rect x="5" y="1" width="3" height="2" fill="#d4d1c4"/><rect x="9" y="1" width="4" height="2" fill="#d4d1c4"/><rect x="1" y="4" width="3" height="2" fill="#d4d1c4"/><rect x="1" y="7" width="3" height="2" fill="#d4d1c4"/><rect x="1" y="10" width="3" height="3" fill="#d4d1c4"/><rect x="5" y="4" width="8" height="9" fill="#fff"/><rect x="8" y="4" width="1" height="9" fill="#000"/><rect x="5" y="6" width="8" height="1" fill="#000"/><rect x="5" y="9" width="8" height="1" fill="#000"/></g></svg><div class="t" style="left:62px;top:376.69px;font-size:11px;color:#000;letter-spacing:-0.08px">Torque Eff Lower Limit</div><div class="a" style="left:32px;top:398px;width:11px;height:1px;background-image:linear-gradient(90deg,#808080 50%,transparent 50%);background-size:2px 1px"></div><svg class="a" style="left:43px;top:391px;" width="14" height="14" viewBox="0 0 14 14"><g shape-rendering="crispEdges"><rect x="0" y="0" width="14" height="14" fill="#0000ff"/><rect x="1" y="1" width="3" height="2" fill="#d4d1c4"/><rect x="5" y="1" width="3" height="2" fill="#d4d1c4"/><rect x="9" y="1" width="4" height="2" fill="#d4d1c4"/><rect x="1" y="4" width="3" height="2" fill="#d4d1c4"/><rect x="1" y="7" width="3" height="2" fill="#d4d1c4"/><rect x="1" y="10" width="3" height="3" fill="#d4d1c4"/><rect x="5" y="4" width="8" height="9" fill="#fff"/><rect x="8" y="4" width="1" height="9" fill="#000"/><rect x="5" y="6" width="8" height="1" fill="#000"/><rect x="5" y="9" width="8" height="1" fill="#000"/></g></svg><div class="t" style="left:62px;top:392.69px;font-size:11px;color:#000;letter-spacing:-0.08px">Torque Loss (Homo)</div><div class="a" style="left:32px;top:414px;width:11px;height:1px;background-image:linear-gradient(90deg,#808080 50%,transparent 50%);background-size:2px 1px"></div><svg class="a" style="left:43px;top:407px;" width="14" height="14" viewBox="0 0 14 14"><g shape-rendering="crispEdges"><rect x="0" y="0" width="14" height="14" fill="#0000ff"/><rect x="1" y="1" width="3" height="2" fill="#d4d1c4"/><rect x="5" y="1" width="3" height="2" fill="#d4d1c4"/><rect x="9" y="1" width="4" height="2" fill="#d4d1c4"/><rect x="1" y="4" width="3" height="2" fill="#d4d1c4"/><rect x="1" y="7" width="3" height="2" fill="#d4d1c4"/><rect x="1" y="10" width="3" height="3" fill="#d4d1c4"/><rect x="5" y="4" width="8" height="9" fill="#fff"/><rect x="8" y="4" width="1" height="9" fill="#000"/><rect x="5" y="6" width="8" height="1" fill="#000"/><rect x="5" y="9" width="8" height="1" fill="#000"/></g></svg><div class="t" style="left:62px;top:408.69px;font-size:11px;color:#000;letter-spacing:-0.08px">Torque Loss (Strat)</div><div class="a" style="left:32px;top:430px;width:11px;height:1px;background-image:linear-gradient(90deg,#808080 50%,transparent 50%);background-size:2px 1px"></div><svg class="a" style="left:43px;top:423px;" width="14" height="14" viewBox="0 0 14 14"><g shape-rendering="crispEdges"><rect x="0" y="0" width="14" height="14" fill="#0000ff"/><rect x="1" y="1" width="3" height="2" fill="#d4d1c4"/><rect x="5" y="1" width="3" height="2" fill="#d4d1c4"/><rect x="9" y="1" width="4" height="2" fill="#d4d1c4"/><rect x="1" y="4" width="3" height="2" fill="#d4d1c4"/><rect x="1" y="7" width="3" height="2" fill="#d4d1c4"/><rect x="1" y="10" width="3" height="3" fill="#d4d1c4"/><rect x="5" y="4" width="8" height="9" fill="#fff"/><rect x="8" y="4" width="1" height="9" fill="#000"/><rect x="5" y="6" width="8" height="1" fill="#000"/><rect x="5" y="9" width="8" height="1" fill="#000"/></g></svg><div class="t" style="left:62px;top:424.69px;font-size:11px;color:#000;letter-spacing:-0.08px">Torque Max (Index Array)</div><div class="a" style="left:32px;top:446px;width:11px;height:1px;background-image:linear-gradient(90deg,#808080 50%,transparent 50%);background-size:2px 1px"></div><svg class="a" style="left:43px;top:439px;" width="14" height="14" viewBox="0 0 14 14"><g shape-rendering="crispEdges"><rect x="0" y="0" width="14" height="14" fill="#0000ff"/><rect x="1" y="1" width="3" height="2" fill="#d4d1c4"/><rect x="5" y="1" width="3" height="2" fill="#d4d1c4"/><rect x="9" y="1" width="4" height="2" fill="#d4d1c4"/><rect x="1" y="4" width="3" height="2" fill="#d4d1c4"/><rect x="1" y="7" width="3" height="2" fill="#d4d1c4"/><rect x="1" y="10" width="3" height="3" fill="#d4d1c4"/><rect x="5" y="4" width="8" height="9" fill="#fff"/><rect x="8" y="4" width="1" height="9" fill="#000"/><rect x="5" y="6" width="8" height="1" fill="#000"/><rect x="5" y="9" width="8" height="1" fill="#000"/></g></svg><div class="t" style="left:62px;top:440.69px;font-size:11px;color:#000;letter-spacing:-0.08px">Speed Limiter</div><div class="a" style="left:32px;top:462px;width:11px;height:1px;background-image:linear-gradient(90deg,#808080 50%,transparent 50%);background-size:2px 1px"></div><svg class="a" style="left:43px;top:455px;" width="14" height="14" viewBox="0 0 14 14"><g shape-rendering="crispEdges"><rect x="0" y="0" width="14" height="14" fill="#0000ff"/><rect x="1" y="1" width="3" height="2" fill="#d4d1c4"/><rect x="5" y="1" width="3" height="2" fill="#d4d1c4"/><rect x="9" y="1" width="4" height="2" fill="#d4d1c4"/><rect x="1" y="4" width="3" height="2" fill="#d4d1c4"/><rect x="1" y="7" width="3" height="2" fill="#d4d1c4"/><rect x="1" y="10" width="3" height="3" fill="#d4d1c4"/><rect x="5" y="4" width="8" height="9" fill="#fff"/><rect x="8" y="4" width="1" height="9" fill="#000"/><rect x="5" y="6" width="8" height="1" fill="#000"/><rect x="5" y="9" width="8" height="1" fill="#000"/></g></svg><div class="t" style="left:62px;top:456.69px;font-size:11px;color:#000;letter-spacing:-0.08px">Torque Limiter 3 (Unk Limits)</div><div class="a" style="left:17px;top:478px;width:6px;height:1px;background-image:linear-gradient(90deg,#808080 50%,transparent 50%);background-size:2px 1px"></div><div class="a" style="left:8px;top:474px;width:9px;height:9px;background:#f4f4f4;border:1px solid #a0a0a0;box-sizing:border-box;border-radius:1px"></div><svg class="a" style="left:8px;top:474px;" width="9" height="9" viewBox="0 0 9 9"><path d="M2 4.5 H7" stroke="#2850a0" stroke-width="1"/></svg><svg class="a" style="left:23px;top:472px;" width="16" height="12" viewBox="0 0 16 12"><path d="M0.5 1.5 H3 L4 0.5 H6 L7 1.5 H11.5 V4.5 H4.5 L0.5 11.5Z" fill="#f5f07a" stroke="#000"/><path d="M0.5 11.5 L4 4.5 H15.5 L11.5 11.5Z" fill="#f0e860" stroke="#000"/></svg><div class="t" style="left:43px;top:472.69px;font-size:11px;color:#000;letter-spacing:-0.08px">Load</div><div class="a" style="left:37px;top:494px;width:6px;height:1px;background-image:linear-gradient(90deg,#808080 50%,transparent 50%);background-size:2px 1px"></div><div class="a" style="left:27px;top:490px;width:9px;height:9px;background:#f4f4f4;border:1px solid #a0a0a0;box-sizing:border-box;border-radius:1px"></div><svg class="a" style="left:27px;top:490px;" width="9" height="9" viewBox="0 0 9 9"><path d="M2 4.5 H7 M4.5 2 V7" stroke="#2850a0" stroke-width="1"/></svg><svg class="a" style="left:42px;top:488px;" width="12" height="11" viewBox="0 0 12 11"><path d="M0.5 1.5 H3 L4 0.5 H6 L7 1.5 H11.5 V10.5 H0.5Z" fill="#f5f07a" stroke="#000"/></svg><div class="t" style="left:62px;top:488.69px;font-size:11px;color:#000;letter-spacing:-0.08px">Load Table Breakpoints</div><div class="a" style="left:32px;top:510px;width:11px;height:1px;background-image:linear-gradient(90deg,#808080 50%,transparent 50%);background-size:2px 1px"></div><svg class="a" style="left:43px;top:503px;" width="14" height="14" viewBox="0 0 14 14"><g shape-rendering="crispEdges"><rect x="0" y="0" width="14" height="14" fill="#0000ff"/><rect x="1" y="1" width="3" height="2" fill="#d4d1c4"/><rect x="5" y="1" width="3" height="2" fill="#d4d1c4"/><rect x="9" y="1" width="4" height="2" fill="#d4d1c4"/><rect x="1" y="4" width="3" height="2" fill="#d4d1c4"/><rect x="1" y="7" width="3" height="2" fill="#d4d1c4"/><rect x="1" y="10" width="3" height="3" fill="#d4d1c4"/><rect x="5" y="4" width="8" height="9" fill="#fff"/><rect x="8" y="4" width="1" height="9" fill="#000"/><rect x="5" y="6" width="8" height="1" fill="#000"/><rect x="5" y="9" width="8" height="1" fill="#000"/></g></svg><div class="t" style="left:62px;top:504.69px;font-size:11px;color:#000;letter-spacing:-0.08px">Load Target</div><div class="a" style="left:32px;top:526px;width:11px;height:1px;background-image:linear-gradient(90deg,#808080 50%,transparent 50%);background-size:2px 1px"></div><svg class="a" style="left:43px;top:519px;" width="14" height="14" viewBox="0 0 14 14"><g shape-rendering="crispEdges"><rect x="0" y="0" width="14" height="14" fill="#0000ff"/><rect x="1" y="1" width="3" height="2" fill="#d4d1c4"/><rect x="5" y="1" width="3" height="2" fill="#d4d1c4"/><rect x="9" y="1" width="4" height="2" fill="#d4d1c4"/><rect x="1" y="4" width="3" height="2" fill="#d4d1c4"/><rect x="1" y="7" width="3" height="2" fill="#d4d1c4"/><rect x="1" y="10" width="3" height="3" fill="#d4d1c4"/><rect x="5" y="4" width="8" height="9" fill="#fff"/><rect x="8" y="4" width="1" height="9" fill="#000"/><rect x="5" y="6" width="8" height="1" fill="#000"/><rect x="5" y="9" width="8" height="1" fill="#000"/></g></svg><div class="t" style="left:62px;top:520.69px;font-size:11px;color:#000;letter-spacing:-0.08px">Load Target (AT)</div><div class="a" style="left:32px;top:542px;width:11px;height:1px;background-image:linear-gradient(90deg,#808080 50%,transparent 50%);background-size:2px 1px"></div><svg class="a" style="left:43px;top:535px;" width="14" height="14" viewBox="0 0 14 14"><g shape-rendering="crispEdges"><rect x="0" y="0" width="14" height="14" fill="#0000ff"/><rect x="1" y="1" width="3" height="2" fill="#d4d1c4"/><rect x="5" y="1" width="3" height="2" fill="#d4d1c4"/><rect x="9" y="1" width="4" height="2" fill="#d4d1c4"/><rect x="1" y="4" width="3" height="2" fill="#d4d1c4"/><rect x="1" y="7" width="3" height="2" fill="#d4d1c4"/><rect x="1" y="10" width="3" height="3" fill="#d4d1c4"/><rect x="5" y="4" width="8" height="9" fill="#fff"/><rect x="8" y="4" width="1" height="9" fill="#000"/><rect x="5" y="6" width="8" height="1" fill="#000"/><rect x="5" y="9" width="8" height="1" fill="#000"/></g></svg><div class="t" style="left:62px;top:536.69px;font-size:11px;color:#000;letter-spacing:-0.08px">Load Target Limit Factor (ECT)</div><div class="a" style="left:32px;top:558px;width:11px;height:1px;background-image:linear-gradient(90deg,#808080 50%,transparent 50%);background-size:2px 1px"></div><svg class="a" style="left:43px;top:551px;" width="14" height="14" viewBox="0 0 14 14"><g shape-rendering="crispEdges"><rect x="0" y="0" width="14" height="14" fill="#0000ff"/><rect x="1" y="1" width="3" height="2" fill="#d4d1c4"/><rect x="5" y="1" width="3" height="2" fill="#d4d1c4"/><rect x="9" y="1" width="4" height="2" fill="#d4d1c4"/><rect x="1" y="4" width="3" height="2" fill="#d4d1c4"/><rect x="1" y="7" width="3" height="2" fill="#d4d1c4"/><rect x="1" y="10" width="3" height="3" fill="#d4d1c4"/><rect x="5" y="4" width="8" height="9" fill="#fff"/><rect x="8" y="4" width="1" height="9" fill="#000"/><rect x="5" y="6" width="8" height="1" fill="#000"/><rect x="5" y="9" width="8" height="1" fill="#000"/></g></svg><div class="t" style="left:62px;top:552.69px;font-size:11px;color:#000;letter-spacing:-0.08px">Load Target Offset (Overboost)</div><div class="a" style="left:32px;top:574px;width:11px;height:1px;background-image:linear-gradient(90deg,#808080 50%,transparent 50%);background-size:2px 1px"></div><svg class="a" style="left:43px;top:567px;" width="14" height="14" viewBox="0 0 14 14"><g shape-rendering="crispEdges"><rect x="0" y="0" width="14" height="14" fill="#0000ff"/><rect x="1" y="1" width="3" height="2" fill="#d4d1c4"/><rect x="5" y="1" width="3" height="2" fill="#d4d1c4"/><rect x="9" y="1" width="4" height="2" fill="#d4d1c4"/><rect x="1" y="4" width="3" height="2" fill="#d4d1c4"/><rect x="1" y="7" width="3" height="2" fill="#d4d1c4"/><rect x="1" y="10" width="3" height="3" fill="#d4d1c4"/><rect x="5" y="4" width="8" height="9" fill="#fff"/><rect x="8" y="4" width="1" height="9" fill="#000"/><rect x="5" y="6" width="8" height="1" fill="#000"/><rect x="5" y="9" width="8" height="1" fill="#000"/></g></svg><div class="a" style="left:61px;top:566px;width:128px;height:16px;background:#f0f0f0"></div><div class="t" style="left:62px;top:568.69px;font-size:11px;color:#000;letter-spacing:-0.08px">Specified Load (Unk Load)</div><div class="a" style="left:277px;top:150px;width:16px;height:435px;background:#f0f0f0"></div><svg class="a" style="left:281px;top:155px;" width="9" height="6" viewBox="0 0 9 6"><path d="M1 5 L4.5 1.5 L8 5" fill="none" stroke="#555" stroke-width="1.6"/></svg><div class="a" style="left:278px;top:314px;width:14px;height:59px;background:#cdcdcd"></div><svg class="a" style="left:281px;top:572px;" width="9" height="6" viewBox="0 0 9 6"><path d="M1 1 L4.5 4.5 L8 1" fill="none" stroke="#555" stroke-width="1.6"/></svg><div class="a" style="left:1px;top:585px;width:292px;height:16px;background:#f0f0f0"></div><svg class="a" style="left:5px;top:588px;" width="8" height="11" viewBox="0 0 8 11"><path d="M6 1 L1.8 5.5 L6 10" fill="none" stroke="#555" stroke-width="1.7"/></svg><div class="a" style="left:18px;top:586px;width:167px;height:14px;background:#cdcdcd"></div><svg class="a" style="left:264px;top:588px;" width="8" height="11" viewBox="0 0 8 11"><path d="M2 1 L6.2 5.5 L2 10" fill="none" stroke="#555" stroke-width="1.7"/></svg><svg class="a" style="left:282px;top:589px;" width="10" height="10" viewBox="0 0 10 10"><rect x="7" y="1" width="2" height="2" fill="#bbb"/><rect x="4" y="4" width="2" height="2" fill="#bbb"/><rect x="7" y="4" width="2" height="2" fill="#bbb"/><rect x="1" y="7" width="2" height="2" fill="#bbb"/><rect x="4" y="7" width="2" height="2" fill="#bbb"/><rect x="7" y="7" width="2" height="2" fill="#bbb"/></svg>
<!-- specload -->
<div class="a" style="left:338px;top:108px;width:819px;height:446px;box-sizing:border-box;border:1px solid #000;border-radius:6px 6px 0 0;background:#b9d1ea;overflow:hidden"><div class="a" style="left:0;top:0;width:100%;height:31px;background:linear-gradient(#9ab6d5,#b9d1ea)"></div><div class="a" style="left:0;top:0;width:1px;height:100%;background:#eef5fb"></div><div class="a" style="right:0;top:6px;width:1px;height:100%;background:#3fc8f0"></div><div class="a" style="left:0;bottom:0;width:100%;height:1px;background:#3fc8f0"></div></div><svg class="a" style="left:348px;top:121px;" width="16" height="12" viewBox="0 0 16 12"><rect x="0" y="2" width="16" height="8" fill="#000"/><rect x="1.5" y="0" width="1.2" height="12" fill="#000"/><rect x="4.5" y="0" width="1.2" height="12" fill="#000"/><rect x="7.5" y="0" width="1.2" height="12" fill="#000"/><rect x="10.5" y="0" width="1.2" height="12" fill="#000"/><rect x="13.5" y="0" width="1.2" height="12" fill="#000"/></svg><div class="t" style="left:652px;top:119.80px;font-size:15px;color:#000;letter-spacing:-0.12px">Specified Load (Unk Load)</div><div class="a" style="left:1115px;top:118px;width:32px;height:18px;border:1px solid #5a1a1a;border-radius:3px;box-sizing:border-box;background:linear-gradient(#eaa898 0%,#d8806c 45%,#b8381e 55%,#c8543a 85%,#d8806c 100%)"></div><svg class="a" style="left:1124px;top:121px;" width="14" height="12" viewBox="0 0 14 12"><path d="M2 2 L12 10 M12 2 L2 10" stroke="#4a2020" stroke-width="4"/><path d="M2 2 L12 10 M12 2 L2 10" stroke="#fff" stroke-width="2.4"/></svg><div class="a" style="left:346px;top:139px;width:802px;height:407px;background:#f0f0f0"></div><div class="a" style="left:348px;top:142px;width:1px;height:20px;background:#a0a0a0"></div><div class="a" style="left:349px;top:142px;width:1px;height:20px;background:#fff"></div><svg class="a" style="left:359px;top:145px;" width="14" height="14" viewBox="0 0 14 14"><rect x="0.5" y="0.5" width="13" height="13" rx="1" fill="#9a9a9a"/><rect x="3" y="1" width="8" height="5" fill="#cfcfcf"/><rect x="8" y="9" width="3" height="3" fill="#e0e0e0"/></svg><svg class="a" style="left:382px;top:145px;" width="13" height="14" viewBox="0 0 13 14"><path d="M1.5 1.5 L11.5 12.5 M11.5 1.5 L1.5 12.5" stroke="#f00" stroke-width="2"/></svg><svg class="a" style="left:404px;top:145px;" width="15" height="14" viewBox="0 0 15 14"><path d="M0.5 0 V13.5 H15" stroke="#000" stroke-dasharray="1 1" fill="none"/><path d="M1 6 L3 9 L5 6 L8 9 L11 5 L14 6" stroke="#e00" stroke-width="1.3" fill="none"/></svg><div class="a" style="left:424px;top:141px;width:23px;height:21px;background:#cce4f7;border:1px solid #7eb4ea;box-sizing:border-box"></div><svg class="a" style="left:427px;top:144px;" width="17" height="16" viewBox="0 0 17 16"><path d="M8.5 1 V14 M4 14.5 H13 M1.5 4 H15.5" stroke="#000" stroke-width="1.5"/><path d="M0 9 L2.5 4 L5 9Z" fill="#f0e020" stroke="#000" stroke-width="0.8"/><path d="M12 9 L14.5 4 L17 9Z" fill="#f0e020" stroke="#000" stroke-width="0.8"/></svg><svg class="a" style="left:451px;top:144px;" width="15" height="16" viewBox="0 0 15 16"><rect x="1" y="1" width="12" height="12" fill="none" stroke="#0000f0" stroke-width="1.6"/><path d="M1 15 L7.5 1 L14 15 Z" fill="none" stroke="#000" stroke-width="2"/><path d="M0 15 H15" stroke="#000" stroke-width="2"/></svg><svg class="a" style="left:473px;top:144px;" width="15" height="16" viewBox="0 0 15 16"><path d="M2 1 L9 11 M9 1 L2 11" stroke="#b0b0b0" stroke-width="2"/><path d="M1 15 H14 L6 9" stroke="#b0b0b0" stroke-width="2" fill="none"/></svg><svg class="a" style="left:497px;top:144px;" width="15" height="16" viewBox="0 0 15 16"><path d="M1 1 L5 7 L9 1 M5 7 V15" stroke="#b0b0b0" stroke-width="2" fill="none"/><path d="M11 15 V2 M7.5 5 L11 1 L14.5 5" stroke="#b0b0b0" stroke-width="2" fill="none"/></svg><div class="a" style="left:543px;top:141px;width:1px;height:21px;background:#a0a0a0"></div><div class="a" style="left:544px;top:141px;width:1px;height:21px;background:#fff"></div><div class="t" style="left:553px;top:145.69px;font-size:11px;color:#000;letter-spacing:-0.1px">Function:</div><div class="a" style="left:602px;top:141px;width:93px;height:21px;background:linear-gradient(#f2f2f2,#e5e5e5);border:1px solid #acacac;box-sizing:border-box"></div><div class="t" style="left:606px;top:145.84px;font-size:12px;color:#000;letter-spacing:0.15px">Offset (+/-)</div><svg class="a" style="left:682px;top:148px;" width="10" height="6" viewBox="0 0 10 6"><path d="M1 1 L5 5 L9 1" fill="none" stroke="#444" stroke-width="1.6"/></svg><div class="t" style="left:700px;top:145.69px;font-size:11px;color:#000;letter-spacing:-0.1px">Value:</div><div class="a" style="left:733px;top:141px;width:48px;height:21px;background:#fff;border:1px solid #abadb3;box-sizing:border-box"></div><div class="t" style="left:740px;top:145.77px;font-size:11.5px;color:#000;">1.0</div><div class="a" style="left:783px;top:142px;width:49px;height:19px;background:#f4f4f4;border:1px solid #dadada;box-sizing:border-box"></div><div class="t" style="left:787px;top:145.84px;font-size:12px;color:#a0a0a0;letter-spacing:-0.55px">Execute</div><div class="a" style="left:346px;top:164px;width:802px;height:358px;background:#808080"></div><div class="a" style="left:346px;top:164px;width:801px;height:1px;background:#a0a0a0"></div><div class="a" style="left:346px;top:165px;width:801px;height:1px;background:#696969"></div><div class="a" style="left:346px;top:164px;width:1px;height:358px;background:#a0a0a0"></div><div class="a" style="left:347px;top:165px;width:1px;height:357px;background:#696969"></div><div class="a" style="left:1147px;top:164px;width:1px;height:358px;background:#fff"></div><div class="a" style="left:348px;top:166px;width:799px;height:16px;background:#fff"></div><div class="a" style="left:348px;top:166px;width:798px;height:15px;background:#f0f0f0;border:1px solid #a0a0a0;box-shadow:inset 1px 1px 0 #fff;box-sizing:border-box;overflow:hidden"><div class="t" style="left:134px;top:1.9px;font-size:12px;font-weight:bold;letter-spacing:0.08px;color:#000">2pecloaexxxxxalpinanewWBAWB71060PR43400 – Kopie (1).bin – Specified Load (Unk Load)</div></div><div class="a" style="left:348px;top:181px;width:782px;height:256px;background:#fff"></div><div class="a" style="left:395px;top:198px;width:735px;height:239px;background:#dcdcdc"></div><div class="a" style="left:348px;top:182px;width:45px;height:14px;background:#f0f0f0;border:1px solid #a0a0a0;box-shadow:inset 1px 1px 0 #fff;box-sizing:border-box;"></div><div class="a" style="left:394px;top:182px;width:45px;height:14px;background:#f0f0f0;border:1px solid #a0a0a0;box-shadow:inset 1px 1px 0 #fff;box-sizing:border-box;"></div><div class="t" style="left:416.5px;transform:translateX(-50%);top:185.69px;font-size:11px;color:#000;">200</div><div class="a" style="left:440px;top:182px;width:45px;height:14px;background:#f0f0f0;border:1px solid #a0a0a0;box-shadow:inset 1px 1px 0 #fff;box-sizing:border-box;"></div><div class="t" style="left:462.5px;transform:translateX(-50%);top:185.69px;font-size:11px;color:#000;">200</div><div class="a" style="left:486px;top:182px;width:45px;height:14px;background:#dcdcdc;border:1px solid #a0a0a0;box-shadow:inset 1px 1px 0 #fff;box-sizing:border-box;"></div><div class="t" style="left:508.5px;transform:translateX(-50%);top:185.69px;font-size:11px;color:#000;">200</div><div class="a" style="left:532px;top:182px;width:45px;height:14px;background:#dcdcdc;border:1px solid #a0a0a0;box-shadow:inset 1px 1px 0 #fff;box-sizing:border-box;"></div><div class="t" style="left:554.5px;transform:translateX(-50%);top:185.69px;font-size:11px;color:#000;">200</div><div class="a" style="left:578px;top:182px;width:45px;height:14px;background:#dcdcdc;border:1px solid #a0a0a0;box-shadow:inset 1px 1px 0 #fff;box-sizing:border-box;"></div><div class="t" style="left:600.5px;transform:translateX(-50%);top:185.69px;font-size:11px;color:#000;">200</div><div class="a" style="left:624px;top:182px;width:45px;height:14px;background:#f0f0f0;border:1px solid #a0a0a0;box-shadow:inset 1px 1px 0 #fff;box-sizing:border-box;"></div><div class="t" style="left:646.5px;transform:translateX(-50%);top:185.69px;font-size:11px;color:#000;">530</div><div class="a" style="left:670px;top:182px;width:45px;height:14px;background:#f0f0f0;border:1px solid #a0a0a0;box-shadow:inset 1px 1px 0 #fff;box-sizing:border-box;"></div><div class="t" style="left:692.5px;transform:translateX(-50%);top:185.69px;font-size:11px;color:#000;">860</div><div class="a" style="left:716px;top:182px;width:45px;height:14px;background:#f0f0f0;border:1px solid #a0a0a0;box-shadow:inset 1px 1px 0 #fff;box-sizing:border-box;"></div><div class="t" style="left:738.5px;transform:translateX(-50%);top:185.69px;font-size:11px;color:#000;">1190</div><div class="a" style="left:762px;top:182px;width:45px;height:14px;background:#f0f0f0;border:1px solid #a0a0a0;box-shadow:inset 1px 1px 0 #fff;box-sizing:border-box;"></div><div class="t" style="left:784.5px;transform:translateX(-50%);top:185.69px;font-size:11px;color:#000;">1520</div><div class="a" style="left:808px;top:182px;width:45px;height:14px;background:#f0f0f0;border:1px solid #a0a0a0;box-shadow:inset 1px 1px 0 #fff;box-sizing:border-box;"></div><div class="t" style="left:830.5px;transform:translateX(-50%);top:185.69px;font-size:11px;color:#000;">1850</div><div class="a" style="left:854px;top:182px;width:45px;height:14px;background:#f0f0f0;border:1px solid #a0a0a0;box-shadow:inset 1px 1px 0 #fff;box-sizing:border-box;"></div><div class="t" style="left:876.5px;transform:translateX(-50%);top:185.69px;font-size:11px;color:#000;">2180</div><div class="a" style="left:900px;top:182px;width:45px;height:14px;background:#f0f0f0;border:1px solid #a0a0a0;box-shadow:inset 1px 1px 0 #fff;box-sizing:border-box;"></div><div class="t" style="left:922.5px;transform:translateX(-50%);top:185.69px;font-size:11px;color:#000;">2510</div><div class="a" style="left:946px;top:182px;width:45px;height:14px;background:#f0f0f0;border:1px solid #a0a0a0;box-shadow:inset 1px 1px 0 #fff;box-sizing:border-box;"></div><div class="t" style="left:968.5px;transform:translateX(-50%);top:185.69px;font-size:11px;color:#000;">2840</div><div class="a" style="left:992px;top:182px;width:45px;height:14px;background:#f0f0f0;border:1px solid #a0a0a0;box-shadow:inset 1px 1px 0 #fff;box-sizing:border-box;"></div><div class="t" style="left:1014.5px;transform:translateX(-50%);top:185.69px;font-size:11px;color:#000;">3170</div><div class="a" style="left:1038px;top:182px;width:45px;height:14px;background:#f0f0f0;border:1px solid #a0a0a0;box-shadow:inset 1px 1px 0 #fff;box-sizing:border-box;"></div><div class="t" style="left:1060.5px;transform:translateX(-50%);top:185.69px;font-size:11px;color:#000;">3500</div><div class="a" style="left:1084px;top:182px;width:45px;height:14px;background:#f0f0f0;border:1px solid #a0a0a0;box-shadow:inset 1px 1px 0 #fff;box-sizing:border-box;"></div><div class="t" style="left:1106.5px;transform:translateX(-50%);top:185.69px;font-size:11px;color:#000;">4000</div><div class="a" style="left:348px;top:197px;width:45px;height:14px;background:#f0f0f0;border:1px solid #a0a0a0;box-shadow:inset 1px 1px 0 #fff;box-sizing:border-box;"></div><div class="t" style="right:976px;top:199.69px;font-size:11px;color:#000;">550</div><div class="a" style="left:395px;top:198px;width:44px;height:13px;background:rgb(208, 219, 190)"></div><div class="t" style="right:928px;top:199.19px;font-size:11px;color:#000;">25.20</div><div class="a" style="left:441px;top:198px;width:44px;height:13px;background:rgb(208, 219, 190)"></div><div class="t" style="right:882px;top:199.19px;font-size:11px;color:#000;">25.20</div><div class="a" style="left:487px;top:198px;width:44px;height:13px;background:rgb(208, 219, 190)"></div><div class="t" style="right:836px;top:199.19px;font-size:11px;color:#000;">25.20</div><div class="a" style="left:533px;top:198px;width:44px;height:13px;background:rgb(208, 219, 190)"></div><div class="t" style="right:790px;top:199.19px;font-size:11px;color:#000;">25.20</div><div class="a" style="left:579px;top:198px;width:44px;height:13px;background:rgb(208, 219, 190)"></div><div class="t" style="right:744px;top:199.19px;font-size:11px;color:#000;">25.20</div><div class="a" style="left:625px;top:198px;width:44px;height:13px;background:rgb(223, 198, 162)"></div><div class="t" style="right:698px;top:199.19px;font-size:11px;color:#000;">53.20</div><div class="a" style="left:671px;top:198px;width:44px;height:13px;background:rgb(234, 174, 142)"></div><div class="t" style="right:652px;top:199.19px;font-size:11px;color:#000;">81.20</div><div class="a" style="left:717px;top:198px;width:44px;height:13px;background:rgb(242, 155, 124)"></div><div class="t" style="right:606px;top:199.19px;font-size:11px;color:#000;">109.20</div><div class="a" style="left:763px;top:198px;width:44px;height:13px;background:rgb(242, 155, 124)"></div><div class="t" style="right:560px;top:199.19px;font-size:11px;color:#000;">137.19</div><div class="a" style="left:809px;top:198px;width:44px;height:13px;background:rgb(242, 155, 124)"></div><div class="t" style="right:514px;top:199.19px;font-size:11px;color:#000;">165.20</div><div class="a" style="left:855px;top:198px;width:44px;height:13px;background:rgb(242, 155, 124)"></div><div class="t" style="right:468px;top:199.19px;font-size:11px;color:#000;">193.20</div><div class="a" style="left:901px;top:198px;width:44px;height:13px;background:rgb(242, 155, 124)"></div><div class="t" style="right:422px;top:199.19px;font-size:11px;color:#000;">218.40</div><div class="a" style="left:947px;top:198px;width:44px;height:13px;background:rgb(242, 155, 124)"></div><div class="t" style="right:376px;top:199.19px;font-size:11px;color:#000;">246.40</div><div class="a" style="left:993px;top:198px;width:44px;height:13px;background:rgb(242, 155, 124)"></div><div class="t" style="right:330px;top:199.19px;font-size:11px;color:#000;">271.60</div><div class="a" style="left:1039px;top:198px;width:44px;height:13px;background:rgb(242, 155, 124)"></div><div class="t" style="right:284px;top:199.19px;font-size:11px;color:#000;">302.39</div><div class="a" style="left:1085px;top:198px;width:44px;height:13px;background:rgb(242, 155, 124)"></div><div class="t" style="right:238px;top:199.19px;font-size:11px;color:#000;">310.80</div><div class="a" style="left:348px;top:212px;width:45px;height:14px;background:#dcdcdc;border:1px solid #a0a0a0;box-shadow:inset 1px 1px 0 #fff;box-sizing:border-box;"></div><div class="t" style="right:976px;top:214.69px;font-size:11px;color:#000;">800</div><div class="a" style="left:395px;top:213px;width:44px;height:13px;background:rgb(207, 221, 193)"></div><div class="t" style="right:928px;top:214.19px;font-size:11px;color:#000;">22.40</div><div class="a" style="left:441px;top:213px;width:44px;height:13px;background:rgb(207, 221, 193)"></div><div class="t" style="right:882px;top:214.19px;font-size:11px;color:#000;">22.40</div><div class="a" style="left:487px;top:213px;width:44px;height:13px;background:rgb(169, 197, 198)"></div><div class="t" style="right:836px;top:214.19px;font-size:11px;color:#000;">22.40</div><div class="a" style="left:533px;top:213px;width:44px;height:13px;background:rgb(169, 197, 198)"></div><div class="t" style="right:790px;top:214.19px;font-size:11px;color:#000;">22.40</div><div class="a" style="left:579px;top:213px;width:44px;height:13px;background:rgb(169, 197, 198)"></div><div class="t" style="right:744px;top:214.19px;font-size:11px;color:#000;">22.40</div><div class="a" style="left:625px;top:213px;width:44px;height:13px;background:rgb(223, 198, 162)"></div><div class="t" style="right:698px;top:214.19px;font-size:11px;color:#000;">53.20</div><div class="a" style="left:671px;top:213px;width:44px;height:13px;background:rgb(236, 167, 136)"></div><div class="t" style="right:652px;top:214.19px;font-size:11px;color:#000;">86.80</div><div class="a" style="left:717px;top:213px;width:44px;height:13px;background:rgb(242, 155, 124)"></div><div class="t" style="right:606px;top:214.19px;font-size:11px;color:#000;">112.00</div><div class="a" style="left:763px;top:213px;width:44px;height:13px;background:rgb(242, 155, 124)"></div><div class="t" style="right:560px;top:214.19px;font-size:11px;color:#000;">134.40</div><div class="a" style="left:809px;top:213px;width:44px;height:13px;background:rgb(242, 155, 124)"></div><div class="t" style="right:514px;top:214.19px;font-size:11px;color:#000;">162.40</div><div class="a" style="left:855px;top:213px;width:44px;height:13px;background:rgb(242, 155, 124)"></div><div class="t" style="right:468px;top:214.19px;font-size:11px;color:#000;">187.60</div><div class="a" style="left:901px;top:213px;width:44px;height:13px;background:rgb(242, 155, 124)"></div><div class="t" style="right:422px;top:214.19px;font-size:11px;color:#000;">215.60</div><div class="a" style="left:947px;top:213px;width:44px;height:13px;background:rgb(242, 155, 124)"></div><div class="t" style="right:376px;top:214.19px;font-size:11px;color:#000;">243.60</div><div class="a" style="left:993px;top:213px;width:44px;height:13px;background:rgb(242, 155, 124)"></div><div class="t" style="right:330px;top:214.19px;font-size:11px;color:#000;">271.60</div><div class="a" style="left:1039px;top:213px;width:44px;height:13px;background:rgb(242, 155, 124)"></div><div class="t" style="right:284px;top:214.19px;font-size:11px;color:#000;">299.60</div><div class="a" style="left:1085px;top:213px;width:44px;height:13px;background:rgb(242, 155, 124)"></div><div class="t" style="right:238px;top:214.19px;font-size:11px;color:#000;">310.80</div><div class="a" style="left:348px;top:227px;width:45px;height:14px;background:#dcdcdc;border:1px solid #a0a0a0;box-shadow:inset 1px 1px 0 #fff;box-sizing:border-box;"></div><div class="t" style="right:976px;top:229.69px;font-size:11px;color:#000;">1000</div><div class="a" style="left:395px;top:228px;width:44px;height:13px;background:rgb(207, 221, 193)"></div><div class="t" style="right:928px;top:229.19px;font-size:11px;color:#000;">22.40</div><div class="a" style="left:441px;top:228px;width:44px;height:13px;background:rgb(207, 221, 193)"></div><div class="t" style="right:882px;top:229.19px;font-size:11px;color:#000;">22.40</div><div class="a" style="left:487px;top:228px;width:44px;height:13px;background:rgb(169, 197, 198)"></div><div class="t" style="right:836px;top:229.19px;font-size:11px;color:#000;">22.40</div><div class="a" style="left:533px;top:228px;width:44px;height:13px;background:rgb(169, 197, 198)"></div><div class="t" style="right:790px;top:229.19px;font-size:11px;color:#000;">22.40</div><div class="a" style="left:579px;top:228px;width:44px;height:13px;background:rgb(169, 197, 198)"></div><div class="t" style="right:744px;top:229.19px;font-size:11px;color:#000;">22.40</div><div class="a" style="left:625px;top:228px;width:44px;height:13px;background:rgb(220, 203, 170)"></div><div class="t" style="right:698px;top:229.19px;font-size:11px;color:#000;">47.60</div><div class="a" style="left:671px;top:228px;width:44px;height:13px;background:rgb(233, 176, 144)"></div><div class="t" style="right:652px;top:229.19px;font-size:11px;color:#000;">78.40</div><div class="a" style="left:717px;top:228px;width:44px;height:13px;background:rgb(242, 155, 124)"></div><div class="t" style="right:606px;top:229.19px;font-size:11px;color:#000;">106.40</div><div class="a" style="left:763px;top:228px;width:44px;height:13px;background:rgb(242, 155, 124)"></div><div class="t" style="right:560px;top:229.19px;font-size:11px;color:#000;">131.60</div><div class="a" style="left:809px;top:228px;width:44px;height:13px;background:rgb(242, 155, 124)"></div><div class="t" style="right:514px;top:229.19px;font-size:11px;color:#000;">156.80</div><div class="a" style="left:855px;top:228px;width:44px;height:13px;background:rgb(242, 155, 124)"></div><div class="t" style="right:468px;top:229.19px;font-size:11px;color:#000;">179.20</div><div class="a" style="left:901px;top:228px;width:44px;height:13px;background:rgb(242, 155, 124)"></div><div class="t" style="right:422px;top:229.19px;font-size:11px;color:#000;">212.80</div><div class="a" style="left:947px;top:228px;width:44px;height:13px;background:rgb(242, 155, 124)"></div><div class="t" style="right:376px;top:229.19px;font-size:11px;color:#000;">238.00</div><div class="a" style="left:993px;top:228px;width:44px;height:13px;background:rgb(242, 155, 124)"></div><div class="t" style="right:330px;top:229.19px;font-size:11px;color:#000;">268.80</div><div class="a" style="left:1039px;top:228px;width:44px;height:13px;background:rgb(242, 155, 124)"></div><div class="t" style="right:284px;top:229.19px;font-size:11px;color:#000;">294.00</div><div class="a" style="left:1085px;top:228px;width:44px;height:13px;background:rgb(242, 155, 124)"></div><div class="t" style="right:238px;top:229.19px;font-size:11px;color:#000;">319.20</div><div class="a" style="left:348px;top:242px;width:45px;height:14px;background:#dcdcdc;border:1px solid #a0a0a0;box-shadow:inset 1px 1px 0 #fff;box-sizing:border-box;"></div><div class="t" style="right:976px;top:244.69px;font-size:11px;color:#000;">1240</div><div class="a" style="left:395px;top:243px;width:44px;height:13px;background:rgb(205, 223, 195)"></div><div class="t" style="right:928px;top:244.19px;font-size:11px;color:#000;">19.60</div><div class="a" style="left:441px;top:243px;width:44px;height:13px;background:rgb(205, 223, 195)"></div><div class="t" style="right:882px;top:244.19px;font-size:11px;color:#000;">19.60</div><div class="a" style="left:487px;top:243px;width:44px;height:13px;background:rgb(169, 197, 198)"></div><div class="t" style="right:836px;top:244.19px;font-size:11px;color:#000;">19.60</div><div class="a" style="left:533px;top:243px;width:44px;height:13px;background:rgb(169, 197, 198)"></div><div class="t" style="right:790px;top:244.19px;font-size:11px;color:#000;">19.60</div><div class="a" style="left:579px;top:243px;width:44px;height:13px;background:rgb(169, 197, 198)"></div><div class="t" style="right:744px;top:244.19px;font-size:11px;color:#000;">19.60</div><div class="a" style="left:625px;top:243px;width:44px;height:13px;background:rgb(216, 208, 178)"></div><div class="t" style="right:698px;top:244.19px;font-size:11px;color:#000;">42.00</div><div class="a" style="left:671px;top:243px;width:44px;height:13px;background:rgb(230, 181, 150)"></div><div class="t" style="right:652px;top:244.19px;font-size:11px;color:#000;">70.00</div><div class="a" style="left:717px;top:243px;width:44px;height:13px;background:rgb(242, 155, 124)"></div><div class="t" style="right:606px;top:244.19px;font-size:11px;color:#000;">100.80</div><div class="a" style="left:763px;top:243px;width:44px;height:13px;background:rgb(242, 155, 124)"></div><div class="t" style="right:560px;top:244.19px;font-size:11px;color:#000;">128.80</div><div class="a" style="left:809px;top:243px;width:44px;height:13px;background:rgb(242, 155, 124)"></div><div class="t" style="right:514px;top:244.19px;font-size:11px;color:#000;">154.00</div><div class="a" style="left:855px;top:243px;width:44px;height:13px;background:rgb(242, 155, 124)"></div><div class="t" style="right:468px;top:244.19px;font-size:11px;color:#000;">179.20</div><div class="a" style="left:901px;top:243px;width:44px;height:13px;background:rgb(242, 155, 124)"></div><div class="t" style="right:422px;top:244.19px;font-size:11px;color:#000;">210.00</div><div class="a" style="left:947px;top:243px;width:44px;height:13px;background:rgb(242, 155, 124)"></div><div class="t" style="right:376px;top:244.19px;font-size:11px;color:#000;">235.20</div><div class="a" style="left:993px;top:243px;width:44px;height:13px;background:rgb(242, 155, 124)"></div><div class="t" style="right:330px;top:244.19px;font-size:11px;color:#000;">263.20</div><div class="a" style="left:1039px;top:243px;width:44px;height:13px;background:rgb(242, 155, 124)"></div><div class="t" style="right:284px;top:244.19px;font-size:11px;color:#000;">291.20</div><div class="a" style="left:1085px;top:243px;width:44px;height:13px;background:rgb(242, 155, 124)"></div><div class="t" style="right:238px;top:244.19px;font-size:11px;color:#000;">324.80</div><div class="a" style="left:348px;top:257px;width:45px;height:14px;background:#dcdcdc;border:1px solid #a0a0a0;box-shadow:inset 1px 1px 0 #fff;box-sizing:border-box;"></div><div class="t" style="right:976px;top:259.69px;font-size:11px;color:#000;">1520</div><div class="a" style="left:395px;top:258px;width:44px;height:13px;background:rgb(205, 223, 195)"></div><div class="t" style="right:928px;top:259.19px;font-size:11px;color:#000;">19.60</div><div class="a" style="left:441px;top:258px;width:44px;height:13px;background:rgb(205, 223, 195)"></div><div class="t" style="right:882px;top:259.19px;font-size:11px;color:#000;">19.60</div><div class="a" style="left:487px;top:258px;width:44px;height:13px;background:rgb(169, 197, 198)"></div><div class="t" style="right:836px;top:259.19px;font-size:11px;color:#000;">19.60</div><div class="a" style="left:533px;top:258px;width:44px;height:13px;background:rgb(169, 197, 198)"></div><div class="t" style="right:790px;top:259.19px;font-size:11px;color:#000;">19.60</div><div class="a" style="left:579px;top:258px;width:44px;height:13px;background:rgb(169, 197, 198)"></div><div class="t" style="right:744px;top:259.19px;font-size:11px;color:#000;">19.60</div><div class="a" style="left:625px;top:258px;width:44px;height:13px;background:rgb(216, 208, 178)"></div><div class="t" style="right:698px;top:259.19px;font-size:11px;color:#000;">42.00</div><div class="a" style="left:671px;top:258px;width:44px;height:13px;background:rgb(230, 181, 150)"></div><div class="t" style="right:652px;top:259.19px;font-size:11px;color:#000;">70.00</div><div class="a" style="left:717px;top:258px;width:44px;height:13px;background:rgb(240, 157, 126)"></div><div class="t" style="right:606px;top:259.19px;font-size:11px;color:#000;">95.20</div><div class="a" style="left:763px;top:258px;width:44px;height:13px;background:rgb(242, 155, 124)"></div><div class="t" style="right:560px;top:259.19px;font-size:11px;color:#000;">123.20</div><div class="a" style="left:809px;top:258px;width:44px;height:13px;background:rgb(242, 155, 124)"></div><div class="t" style="right:514px;top:259.19px;font-size:11px;color:#000;">148.40</div><div class="a" style="left:855px;top:258px;width:44px;height:13px;background:rgb(242, 155, 124)"></div><div class="t" style="right:468px;top:259.19px;font-size:11px;color:#000;">181.72</div><div class="a" style="left:901px;top:258px;width:44px;height:13px;background:rgb(242, 155, 124)"></div><div class="t" style="right:422px;top:259.19px;font-size:11px;color:#000;">215.63</div><div class="a" style="left:947px;top:258px;width:44px;height:13px;background:rgb(242, 155, 124)"></div><div class="t" style="right:376px;top:259.19px;font-size:11px;color:#000;">247.75</div><div class="a" style="left:993px;top:258px;width:44px;height:13px;background:rgb(242, 155, 124)"></div><div class="t" style="right:330px;top:259.19px;font-size:11px;color:#000;">277.61</div><div class="a" style="left:1039px;top:258px;width:44px;height:13px;background:rgb(242, 155, 124)"></div><div class="t" style="right:284px;top:259.19px;font-size:11px;color:#000;">308.19</div><div class="a" style="left:1085px;top:258px;width:44px;height:13px;background:rgb(242, 155, 124)"></div><div class="t" style="right:238px;top:259.19px;font-size:11px;color:#000;">-306.80</div><div class="a" style="left:348px;top:272px;width:45px;height:14px;background:#dcdcdc;border:1px solid #a0a0a0;box-shadow:inset 1px 1px 0 #fff;box-sizing:border-box;"></div><div class="t" style="right:976px;top:274.69px;font-size:11px;color:#000;">1760</div><div class="a" style="left:395px;top:273px;width:44px;height:13px;background:rgb(205, 223, 195)"></div><div class="t" style="right:928px;top:274.19px;font-size:11px;color:#000;">19.60</div><div class="a" style="left:441px;top:273px;width:44px;height:13px;background:rgb(205, 223, 195)"></div><div class="t" style="right:882px;top:274.19px;font-size:11px;color:#000;">19.60</div><div class="a" style="left:487px;top:273px;width:44px;height:13px;background:rgb(169, 197, 198)"></div><div class="t" style="right:836px;top:274.19px;font-size:11px;color:#000;">19.60</div><div class="a" style="left:533px;top:273px;width:44px;height:13px;background:rgb(169, 197, 198)"></div><div class="t" style="right:790px;top:274.19px;font-size:11px;color:#000;">19.60</div><div class="a" style="left:579px;top:273px;width:44px;height:13px;background:rgb(169, 197, 198)"></div><div class="t" style="right:744px;top:274.19px;font-size:11px;color:#000;">19.60</div><div class="a" style="left:625px;top:273px;width:44px;height:13px;background:rgb(216, 208, 178)"></div><div class="t" style="right:698px;top:274.19px;font-size:11px;color:#000;">42.00</div><div class="a" style="left:671px;top:273px;width:44px;height:13px;background:rgb(230, 181, 150)"></div><div class="t" style="right:652px;top:274.19px;font-size:11px;color:#000;">70.00</div><div class="a" style="left:717px;top:273px;width:44px;height:13px;background:rgb(240, 157, 126)"></div><div class="t" style="right:606px;top:274.19px;font-size:11px;color:#000;">95.20</div><div class="a" style="left:763px;top:273px;width:44px;height:13px;background:rgb(242, 155, 124)"></div><div class="t" style="right:560px;top:274.19px;font-size:11px;color:#000;">120.40</div><div class="a" style="left:809px;top:273px;width:44px;height:13px;background:rgb(242, 155, 124)"></div><div class="t" style="right:514px;top:274.19px;font-size:11px;color:#000;">145.60</div><div class="a" style="left:855px;top:273px;width:44px;height:13px;background:rgb(242, 155, 124)"></div><div class="t" style="right:468px;top:274.19px;font-size:11px;color:#000;">179.31</div><div class="a" style="left:901px;top:273px;width:44px;height:13px;background:rgb(242, 155, 124)"></div><div class="t" style="right:422px;top:274.19px;font-size:11px;color:#000;">207.39</div><div class="a" style="left:947px;top:273px;width:44px;height:13px;background:rgb(242, 155, 124)"></div><div class="t" style="right:376px;top:274.19px;font-size:11px;color:#000;">242.50</div><div class="a" style="left:993px;top:273px;width:44px;height:13px;background:rgb(242, 155, 124)"></div><div class="t" style="right:330px;top:274.19px;font-size:11px;color:#000;">275.43</div><div class="a" style="left:1039px;top:273px;width:44px;height:13px;background:rgb(242, 155, 124)"></div><div class="t" style="right:284px;top:274.19px;font-size:11px;color:#000;">306.08</div><div class="a" style="left:1085px;top:273px;width:44px;height:13px;background:rgb(242, 155, 124)"></div><div class="t" style="right:238px;top:274.19px;font-size:11px;color:#000;">-305.69</div><div class="a" style="left:348px;top:287px;width:45px;height:14px;background:#dcdcdc;border:1px solid #a0a0a0;box-shadow:inset 1px 1px 0 #fff;box-sizing:border-box;"></div><div class="t" style="right:976px;top:289.69px;font-size:11px;color:#000;">2000</div><div class="a" style="left:395px;top:288px;width:44px;height:13px;background:rgb(205, 223, 195)"></div><div class="t" style="right:928px;top:289.19px;font-size:11px;color:#000;">19.60</div><div class="a" style="left:441px;top:288px;width:44px;height:13px;background:rgb(205, 223, 195)"></div><div class="t" style="right:882px;top:289.19px;font-size:11px;color:#000;">19.60</div><div class="a" style="left:487px;top:288px;width:44px;height:13px;background:rgb(169, 197, 198)"></div><div class="t" style="right:836px;top:289.19px;font-size:11px;color:#000;">19.60</div><div class="a" style="left:533px;top:288px;width:44px;height:13px;background:rgb(169, 197, 198)"></div><div class="t" style="right:790px;top:289.19px;font-size:11px;color:#000;">19.60</div><div class="a" style="left:579px;top:288px;width:44px;height:13px;background:rgb(169, 197, 198)"></div><div class="t" style="right:744px;top:289.19px;font-size:11px;color:#000;">19.60</div><div class="a" style="left:625px;top:288px;width:44px;height:13px;background:rgb(216, 208, 178)"></div><div class="t" style="right:698px;top:289.19px;font-size:11px;color:#000;">42.00</div><div class="a" style="left:671px;top:288px;width:44px;height:13px;background:rgb(229, 184, 152)"></div><div class="t" style="right:652px;top:289.19px;font-size:11px;color:#000;">67.20</div><div class="a" style="left:717px;top:288px;width:44px;height:13px;background:rgb(238, 164, 132)"></div><div class="t" style="right:606px;top:289.19px;font-size:11px;color:#000;">89.60</div><div class="a" style="left:763px;top:288px;width:44px;height:13px;background:rgb(242, 155, 124)"></div><div class="t" style="right:560px;top:289.19px;font-size:11px;color:#000;">120.40</div><div class="a" style="left:809px;top:288px;width:44px;height:13px;background:rgb(242, 155, 124)"></div><div class="t" style="right:514px;top:289.19px;font-size:11px;color:#000;">142.80</div><div class="a" style="left:855px;top:288px;width:44px;height:13px;background:rgb(242, 155, 124)"></div><div class="t" style="right:468px;top:289.19px;font-size:11px;color:#000;">176.89</div><div class="a" style="left:901px;top:288px;width:44px;height:13px;background:rgb(242, 155, 124)"></div><div class="t" style="right:422px;top:289.19px;font-size:11px;color:#000;">204.99</div><div class="a" style="left:947px;top:288px;width:44px;height:13px;background:rgb(242, 155, 124)"></div><div class="t" style="right:376px;top:289.19px;font-size:11px;color:#000;">237.21</div><div class="a" style="left:993px;top:288px;width:44px;height:13px;background:rgb(242, 155, 124)"></div><div class="t" style="right:330px;top:289.19px;font-size:11px;color:#000;">270.20</div><div class="a" style="left:1039px;top:288px;width:44px;height:13px;background:rgb(242, 155, 124)"></div><div class="t" style="right:284px;top:289.19px;font-size:11px;color:#000;">303.97</div><div class="a" style="left:1085px;top:288px;width:44px;height:13px;background:rgb(242, 155, 124)"></div><div class="t" style="right:238px;top:289.19px;font-size:11px;color:#000;">-304.58</div><div class="a" style="left:348px;top:302px;width:45px;height:14px;background:#dcdcdc;border:1px solid #a0a0a0;box-shadow:inset 1px 1px 0 #fff;box-sizing:border-box;"></div><div class="t" style="right:976px;top:304.69px;font-size:11px;color:#000;">2520</div><div class="a" style="left:395px;top:303px;width:44px;height:13px;background:rgb(205, 223, 195)"></div><div class="t" style="right:928px;top:304.19px;font-size:11px;color:#000;">19.60</div><div class="a" style="left:441px;top:303px;width:44px;height:13px;background:rgb(205, 223, 195)"></div><div class="t" style="right:882px;top:304.19px;font-size:11px;color:#000;">19.60</div><div class="a" style="left:487px;top:303px;width:44px;height:13px;background:rgb(169, 197, 198)"></div><div class="t" style="right:836px;top:304.19px;font-size:11px;color:#000;">19.60</div><div class="a" style="left:533px;top:303px;width:44px;height:13px;background:rgb(169, 197, 198)"></div><div class="t" style="right:790px;top:304.19px;font-size:11px;color:#000;">19.60</div><div class="a" style="left:579px;top:303px;width:44px;height:13px;background:rgb(169, 197, 198)"></div><div class="t" style="right:744px;top:304.19px;font-size:11px;color:#000;">19.60</div><div class="a" style="left:625px;top:303px;width:44px;height:13px;background:rgb(216, 208, 178)"></div><div class="t" style="right:698px;top:304.19px;font-size:11px;color:#000;">42.00</div><div class="a" style="left:671px;top:303px;width:44px;height:13px;background:rgb(228, 187, 154)"></div><div class="t" style="right:652px;top:304.19px;font-size:11px;color:#000;">64.40</div><div class="a" style="left:717px;top:303px;width:44px;height:13px;background:rgb(238, 164, 132)"></div><div class="t" style="right:606px;top:304.19px;font-size:11px;color:#000;">89.60</div><div class="a" style="left:763px;top:303px;width:44px;height:13px;background:rgb(242, 155, 124)"></div><div class="t" style="right:560px;top:304.19px;font-size:11px;color:#000;">120.40</div><div class="a" style="left:809px;top:303px;width:44px;height:13px;background:rgb(242, 155, 124)"></div><div class="t" style="right:514px;top:304.19px;font-size:11px;color:#000;">142.80</div><div class="a" style="left:855px;top:303px;width:44px;height:13px;background:rgb(242, 155, 124)"></div><div class="t" style="right:468px;top:304.19px;font-size:11px;color:#000;">177.41</div><div class="a" style="left:901px;top:303px;width:44px;height:13px;background:rgb(242, 155, 124)"></div><div class="t" style="right:422px;top:304.19px;font-size:11px;color:#000;">202.60</div><div class="a" style="left:947px;top:303px;width:44px;height:13px;background:rgb(242, 155, 124)"></div><div class="t" style="right:376px;top:304.19px;font-size:11px;color:#000;">237.91</div><div class="a" style="left:993px;top:303px;width:44px;height:13px;background:rgb(242, 155, 124)"></div><div class="t" style="right:330px;top:304.19px;font-size:11px;color:#000;">265.04</div><div class="a" style="left:1039px;top:303px;width:44px;height:13px;background:rgb(242, 155, 124)"></div><div class="t" style="right:284px;top:304.19px;font-size:11px;color:#000;">298.87</div><div class="a" style="left:1085px;top:303px;width:44px;height:13px;background:rgb(242, 155, 124)"></div><div class="t" style="right:238px;top:304.19px;font-size:11px;color:#000;">-306.40</div><div class="a" style="left:348px;top:317px;width:45px;height:14px;background:#dcdcdc;border:1px solid #a0a0a0;box-shadow:inset 1px 1px 0 #fff;box-sizing:border-box;"></div><div class="t" style="right:976px;top:319.69px;font-size:11px;color:#000;">3000</div><div class="a" style="left:395px;top:318px;width:44px;height:13px;background:rgb(205, 223, 195)"></div><div class="t" style="right:928px;top:319.19px;font-size:11px;color:#000;">19.60</div><div class="a" style="left:441px;top:318px;width:44px;height:13px;background:rgb(205, 223, 195)"></div><div class="t" style="right:882px;top:319.19px;font-size:11px;color:#000;">19.60</div><div class="a" style="left:487px;top:318px;width:44px;height:13px;background:rgb(169, 197, 198)"></div><div class="t" style="right:836px;top:319.19px;font-size:11px;color:#000;">19.60</div><div class="a" style="left:533px;top:318px;width:44px;height:13px;background:rgb(169, 197, 198)"></div><div class="t" style="right:790px;top:319.19px;font-size:11px;color:#000;">19.60</div><div class="a" style="left:579px;top:318px;width:44px;height:13px;background:rgb(169, 197, 198)"></div><div class="t" style="right:744px;top:319.19px;font-size:11px;color:#000;">19.60</div><div class="a" style="left:625px;top:318px;width:44px;height:13px;background:rgb(216, 208, 178)"></div><div class="t" style="right:698px;top:319.19px;font-size:11px;color:#000;">42.00</div><div class="a" style="left:671px;top:318px;width:44px;height:13px;background:rgb(228, 187, 154)"></div><div class="t" style="right:652px;top:319.19px;font-size:11px;color:#000;">64.40</div><div class="a" style="left:717px;top:318px;width:44px;height:13px;background:rgb(238, 164, 132)"></div><div class="t" style="right:606px;top:319.19px;font-size:11px;color:#000;">89.60</div><div class="a" style="left:763px;top:318px;width:44px;height:13px;background:rgb(242, 155, 124)"></div><div class="t" style="right:560px;top:319.19px;font-size:11px;color:#000;">120.40</div><div class="a" style="left:809px;top:318px;width:44px;height:13px;background:rgb(242, 155, 124)"></div><div class="t" style="right:514px;top:319.19px;font-size:11px;color:#000;">145.60</div><div class="a" style="left:855px;top:318px;width:44px;height:13px;background:rgb(242, 155, 124)"></div><div class="t" style="right:468px;top:319.19px;font-size:11px;color:#000;">180.82</div><div class="a" style="left:901px;top:318px;width:44px;height:13px;background:rgb(242, 155, 124)"></div><div class="t" style="right:422px;top:319.19px;font-size:11px;color:#000;">206.14</div><div class="a" style="left:947px;top:318px;width:44px;height:13px;background:rgb(242, 155, 124)"></div><div class="t" style="right:376px;top:319.19px;font-size:11px;color:#000;">238.67</div><div class="a" style="left:993px;top:318px;width:44px;height:13px;background:rgb(242, 155, 124)"></div><div class="t" style="right:330px;top:319.19px;font-size:11px;color:#000;">265.97</div><div class="a" style="left:1039px;top:318px;width:44px;height:13px;background:rgb(242, 155, 124)"></div><div class="t" style="right:284px;top:319.19px;font-size:11px;color:#000;">296.94</div><div class="a" style="left:1085px;top:318px;width:44px;height:13px;background:rgb(242, 155, 124)"></div><div class="t" style="right:238px;top:319.19px;font-size:11px;color:#000;">-311.19</div><div class="a" style="left:348px;top:332px;width:45px;height:14px;background:#f0f0f0;border:1px solid #a0a0a0;box-shadow:inset 1px 1px 0 #fff;box-sizing:border-box;"></div><div class="t" style="right:976px;top:334.69px;font-size:11px;color:#000;">3520</div><div class="a" style="left:395px;top:333px;width:44px;height:13px;background:rgb(200, 228, 198)"></div><div class="t" style="right:928px;top:334.19px;font-size:11px;color:#000;">14.00</div><div class="a" style="left:441px;top:333px;width:44px;height:13px;background:rgb(200, 228, 198)"></div><div class="t" style="right:882px;top:334.19px;font-size:11px;color:#000;">14.00</div><div class="a" style="left:487px;top:333px;width:44px;height:13px;background:rgb(200, 228, 198)"></div><div class="t" style="right:836px;top:334.19px;font-size:11px;color:#000;">14.00</div><div class="a" style="left:533px;top:333px;width:44px;height:13px;background:rgb(200, 228, 198)"></div><div class="t" style="right:790px;top:334.19px;font-size:11px;color:#000;">14.00</div><div class="a" style="left:579px;top:333px;width:44px;height:13px;background:rgb(200, 228, 198)"></div><div class="t" style="right:744px;top:334.19px;font-size:11px;color:#000;">14.00</div><div class="a" style="left:625px;top:333px;width:44px;height:13px;background:rgb(216, 208, 178)"></div><div class="t" style="right:698px;top:334.19px;font-size:11px;color:#000;">42.00</div><div class="a" style="left:671px;top:333px;width:44px;height:13px;background:rgb(228, 187, 154)"></div><div class="t" style="right:652px;top:334.19px;font-size:11px;color:#000;">64.40</div><div class="a" style="left:717px;top:333px;width:44px;height:13px;background:rgb(238, 164, 132)"></div><div class="t" style="right:606px;top:334.19px;font-size:11px;color:#000;">89.60</div><div class="a" style="left:763px;top:333px;width:44px;height:13px;background:rgb(242, 155, 124)"></div><div class="t" style="right:560px;top:334.19px;font-size:11px;color:#000;">117.60</div><div class="a" style="left:809px;top:333px;width:44px;height:13px;background:rgb(242, 155, 124)"></div><div class="t" style="right:514px;top:334.19px;font-size:11px;color:#000;">140.00</div><div class="a" style="left:855px;top:333px;width:44px;height:13px;background:rgb(242, 155, 124)"></div><div class="t" style="right:468px;top:334.19px;font-size:11px;color:#000;">175.48</div><div class="a" style="left:901px;top:333px;width:44px;height:13px;background:rgb(242, 155, 124)"></div><div class="t" style="right:422px;top:334.19px;font-size:11px;color:#000;">200.81</div><div class="a" style="left:947px;top:333px;width:44px;height:13px;background:rgb(242, 155, 124)"></div><div class="t" style="right:376px;top:334.19px;font-size:11px;color:#000;">230.41</div><div class="a" style="left:993px;top:333px;width:44px;height:13px;background:rgb(242, 155, 124)"></div><div class="t" style="right:330px;top:334.19px;font-size:11px;color:#000;">263.77</div><div class="a" style="left:1039px;top:333px;width:44px;height:13px;background:rgb(242, 155, 124)"></div><div class="t" style="right:284px;top:334.19px;font-size:11px;color:#000;">294.88</div><div class="a" style="left:1085px;top:333px;width:44px;height:13px;background:rgb(242, 155, 124)"></div><div class="t" style="right:238px;top:334.19px;font-size:11px;color:#000;">-313.05</div><div class="a" style="left:348px;top:347px;width:45px;height:14px;background:#f0f0f0;border:1px solid #a0a0a0;box-shadow:inset 1px 1px 0 #fff;box-sizing:border-box;"></div><div class="t" style="right:976px;top:349.69px;font-size:11px;color:#000;">4000</div><div class="a" style="left:395px;top:348px;width:44px;height:13px;background:rgb(200, 228, 198)"></div><div class="t" style="right:928px;top:349.19px;font-size:11px;color:#000;">14.00</div><div class="a" style="left:441px;top:348px;width:44px;height:13px;background:rgb(200, 228, 198)"></div><div class="t" style="right:882px;top:349.19px;font-size:11px;color:#000;">14.00</div><div class="a" style="left:487px;top:348px;width:44px;height:13px;background:rgb(200, 228, 198)"></div><div class="t" style="right:836px;top:349.19px;font-size:11px;color:#000;">14.00</div><div class="a" style="left:533px;top:348px;width:44px;height:13px;background:rgb(200, 228, 198)"></div><div class="t" style="right:790px;top:349.19px;font-size:11px;color:#000;">14.00</div><div class="a" style="left:579px;top:348px;width:44px;height:13px;background:rgb(200, 228, 198)"></div><div class="t" style="right:744px;top:349.19px;font-size:11px;color:#000;">14.00</div><div class="a" style="left:625px;top:348px;width:44px;height:13px;background:rgb(214, 209, 179)"></div><div class="t" style="right:698px;top:349.19px;font-size:11px;color:#000;">39.20</div><div class="a" style="left:671px;top:348px;width:44px;height:13px;background:rgb(226, 190, 156)"></div><div class="t" style="right:652px;top:349.19px;font-size:11px;color:#000;">61.60</div><div class="a" style="left:717px;top:348px;width:44px;height:13px;background:rgb(238, 164, 132)"></div><div class="t" style="right:606px;top:349.19px;font-size:11px;color:#000;">89.60</div><div class="a" style="left:763px;top:348px;width:44px;height:13px;background:rgb(242, 155, 124)"></div><div class="t" style="right:560px;top:349.19px;font-size:11px;color:#000;">114.80</div><div class="a" style="left:809px;top:348px;width:44px;height:13px;background:rgb(242, 155, 124)"></div><div class="t" style="right:514px;top:349.19px;font-size:11px;color:#000;">140.00</div><div class="a" style="left:855px;top:348px;width:44px;height:13px;background:rgb(242, 155, 124)"></div><div class="t" style="right:468px;top:349.19px;font-size:11px;color:#000;">170.16</div><div class="a" style="left:901px;top:348px;width:44px;height:13px;background:rgb(242, 155, 124)"></div><div class="t" style="right:422px;top:349.19px;font-size:11px;color:#000;">198.47</div><div class="a" style="left:947px;top:348px;width:44px;height:13px;background:rgb(242, 155, 124)"></div><div class="t" style="right:376px;top:349.19px;font-size:11px;color:#000;">228.18</div><div class="a" style="left:993px;top:348px;width:44px;height:13px;background:rgb(242, 155, 124)"></div><div class="t" style="right:330px;top:349.19px;font-size:11px;color:#000;">258.66</div><div class="a" style="left:1039px;top:348px;width:44px;height:13px;background:rgb(242, 155, 124)"></div><div class="t" style="right:284px;top:349.19px;font-size:11px;color:#000;">289.88</div><div class="a" style="left:1085px;top:348px;width:44px;height:13px;background:rgb(242, 155, 124)"></div><div class="t" style="right:238px;top:349.19px;font-size:11px;color:#000;">-317.91</div><div class="a" style="left:348px;top:362px;width:45px;height:14px;background:#f0f0f0;border:1px solid #a0a0a0;box-shadow:inset 1px 1px 0 #fff;box-sizing:border-box;"></div><div class="t" style="right:976px;top:364.69px;font-size:11px;color:#000;">4520</div><div class="a" style="left:395px;top:363px;width:44px;height:13px;background:rgb(200, 228, 198)"></div><div class="t" style="right:928px;top:364.19px;font-size:11px;color:#000;">14.00</div><div class="a" style="left:441px;top:363px;width:44px;height:13px;background:rgb(200, 228, 198)"></div><div class="t" style="right:882px;top:364.19px;font-size:11px;color:#000;">14.00</div><div class="a" style="left:487px;top:363px;width:44px;height:13px;background:rgb(200, 228, 198)"></div><div class="t" style="right:836px;top:364.19px;font-size:11px;color:#000;">14.00</div><div class="a" style="left:533px;top:363px;width:44px;height:13px;background:rgb(200, 228, 198)"></div><div class="t" style="right:790px;top:364.19px;font-size:11px;color:#000;">14.00</div><div class="a" style="left:579px;top:363px;width:44px;height:13px;background:rgb(200, 228, 198)"></div><div class="t" style="right:744px;top:364.19px;font-size:11px;color:#000;">14.00</div><div class="a" style="left:625px;top:363px;width:44px;height:13px;background:rgb(214, 209, 179)"></div><div class="t" style="right:698px;top:364.19px;font-size:11px;color:#000;">39.20</div><div class="a" style="left:671px;top:363px;width:44px;height:13px;background:rgb(228, 187, 154)"></div><div class="t" style="right:652px;top:364.19px;font-size:11px;color:#000;">64.40</div><div class="a" style="left:717px;top:363px;width:44px;height:13px;background:rgb(238, 164, 132)"></div><div class="t" style="right:606px;top:364.19px;font-size:11px;color:#000;">89.60</div><div class="a" style="left:763px;top:363px;width:44px;height:13px;background:rgb(242, 155, 124)"></div><div class="t" style="right:560px;top:364.19px;font-size:11px;color:#000;">114.80</div><div class="a" style="left:809px;top:363px;width:44px;height:13px;background:rgb(242, 155, 124)"></div><div class="t" style="right:514px;top:364.19px;font-size:11px;color:#000;">140.00</div><div class="a" style="left:855px;top:363px;width:44px;height:13px;background:rgb(242, 155, 124)"></div><div class="t" style="right:468px;top:364.19px;font-size:11px;color:#000;">173.47</div><div class="a" style="left:901px;top:363px;width:44px;height:13px;background:rgb(242, 155, 124)"></div><div class="t" style="right:422px;top:364.19px;font-size:11px;color:#000;">198.97</div><div class="a" style="left:947px;top:363px;width:44px;height:13px;background:rgb(242, 155, 124)"></div><div class="t" style="right:376px;top:364.19px;font-size:11px;color:#000;">231.82</div><div class="a" style="left:993px;top:363px;width:44px;height:13px;background:rgb(242, 155, 124)"></div><div class="t" style="right:330px;top:364.19px;font-size:11px;color:#000;">259.39</div><div class="a" style="left:1039px;top:363px;width:44px;height:13px;background:rgb(242, 155, 124)"></div><div class="t" style="right:284px;top:364.19px;font-size:11px;color:#000;">293.86</div><div class="a" style="left:1085px;top:363px;width:44px;height:13px;background:rgb(242, 155, 124)"></div><div class="t" style="right:238px;top:364.19px;font-size:11px;color:#000;">-316.81</div><div class="a" style="left:348px;top:377px;width:45px;height:14px;background:#f0f0f0;border:1px solid #a0a0a0;box-shadow:inset 1px 1px 0 #fff;box-sizing:border-box;"></div><div class="t" style="right:976px;top:379.69px;font-size:11px;color:#000;">5000</div><div class="a" style="left:395px;top:378px;width:44px;height:13px;background:rgb(200, 228, 198)"></div><div class="t" style="right:928px;top:379.19px;font-size:11px;color:#000;">14.00</div><div class="a" style="left:441px;top:378px;width:44px;height:13px;background:rgb(200, 228, 198)"></div><div class="t" style="right:882px;top:379.19px;font-size:11px;color:#000;">14.00</div><div class="a" style="left:487px;top:378px;width:44px;height:13px;background:rgb(200, 228, 198)"></div><div class="t" style="right:836px;top:379.19px;font-size:11px;color:#000;">14.00</div><div class="a" style="left:533px;top:378px;width:44px;height:13px;background:rgb(200, 228, 198)"></div><div class="t" style="right:790px;top:379.19px;font-size:11px;color:#000;">14.00</div><div class="a" style="left:579px;top:378px;width:44px;height:13px;background:rgb(200, 228, 198)"></div><div class="t" style="right:744px;top:379.19px;font-size:11px;color:#000;">14.00</div><div class="a" style="left:625px;top:378px;width:44px;height:13px;background:rgb(216, 208, 178)"></div><div class="t" style="right:698px;top:379.19px;font-size:11px;color:#000;">42.00</div><div class="a" style="left:671px;top:378px;width:44px;height:13px;background:rgb(228, 187, 154)"></div><div class="t" style="right:652px;top:379.19px;font-size:11px;color:#000;">64.40</div><div class="a" style="left:717px;top:378px;width:44px;height:13px;background:rgb(238, 164, 132)"></div><div class="t" style="right:606px;top:379.19px;font-size:11px;color:#000;">89.60</div><div class="a" style="left:763px;top:378px;width:44px;height:13px;background:rgb(242, 155, 124)"></div><div class="t" style="right:560px;top:379.19px;font-size:11px;color:#000;">117.60</div><div class="a" style="left:809px;top:378px;width:44px;height:13px;background:rgb(242, 155, 124)"></div><div class="t" style="right:514px;top:379.19px;font-size:11px;color:#000;">142.80</div><div class="a" style="left:855px;top:378px;width:44px;height:13px;background:rgb(242, 155, 124)"></div><div class="t" style="right:468px;top:379.19px;font-size:11px;color:#000;">173.98</div><div class="a" style="left:901px;top:378px;width:44px;height:13px;background:rgb(242, 155, 124)"></div><div class="t" style="right:422px;top:379.19px;font-size:11px;color:#000;">202.45</div><div class="a" style="left:947px;top:378px;width:44px;height:13px;background:rgb(242, 155, 124)"></div><div class="t" style="right:376px;top:379.19px;font-size:11px;color:#000;">232.44</div><div class="a" style="left:993px;top:378px;width:44px;height:13px;background:rgb(242, 155, 124)"></div><div class="t" style="right:330px;top:379.19px;font-size:11px;color:#000;">260.16</div><div class="a" style="left:1039px;top:378px;width:44px;height:13px;background:rgb(242, 155, 124)"></div><div class="t" style="right:284px;top:379.19px;font-size:11px;color:#000;">291.66</div><div class="a" style="left:1085px;top:378px;width:44px;height:13px;background:rgb(242, 155, 124)"></div><div class="t" style="right:238px;top:379.19px;font-size:11px;color:#000;">-315.72</div><div class="a" style="left:348px;top:392px;width:45px;height:14px;background:#f0f0f0;border:1px solid #a0a0a0;box-shadow:inset 1px 1px 0 #fff;box-sizing:border-box;"></div><div class="t" style="right:976px;top:394.69px;font-size:11px;color:#000;">5520</div><div class="a" style="left:395px;top:393px;width:44px;height:13px;background:rgb(205, 223, 195)"></div><div class="t" style="right:928px;top:394.19px;font-size:11px;color:#000;">19.60</div><div class="a" style="left:441px;top:393px;width:44px;height:13px;background:rgb(205, 223, 195)"></div><div class="t" style="right:882px;top:394.19px;font-size:11px;color:#000;">19.60</div><div class="a" style="left:487px;top:393px;width:44px;height:13px;background:rgb(205, 223, 195)"></div><div class="t" style="right:836px;top:394.19px;font-size:11px;color:#000;">19.60</div><div class="a" style="left:533px;top:393px;width:44px;height:13px;background:rgb(205, 223, 195)"></div><div class="t" style="right:790px;top:394.19px;font-size:11px;color:#000;">19.60</div><div class="a" style="left:579px;top:393px;width:44px;height:13px;background:rgb(205, 223, 195)"></div><div class="t" style="right:744px;top:394.19px;font-size:11px;color:#000;">19.60</div><div class="a" style="left:625px;top:393px;width:44px;height:13px;background:rgb(216, 208, 178)"></div><div class="t" style="right:698px;top:394.19px;font-size:11px;color:#000;">42.00</div><div class="a" style="left:671px;top:393px;width:44px;height:13px;background:rgb(230, 181, 150)"></div><div class="t" style="right:652px;top:394.19px;font-size:11px;color:#000;">70.00</div><div class="a" style="left:717px;top:393px;width:44px;height:13px;background:rgb(239, 160, 129)"></div><div class="t" style="right:606px;top:394.19px;font-size:11px;color:#000;">92.40</div><div class="a" style="left:763px;top:393px;width:44px;height:13px;background:rgb(242, 155, 124)"></div><div class="t" style="right:560px;top:394.19px;font-size:11px;color:#000;">120.40</div><div class="a" style="left:809px;top:393px;width:44px;height:13px;background:rgb(242, 155, 124)"></div><div class="t" style="right:514px;top:394.19px;font-size:11px;color:#000;">142.80</div><div class="a" style="left:855px;top:393px;width:44px;height:13px;background:rgb(242, 155, 124)"></div><div class="t" style="right:468px;top:394.19px;font-size:11px;color:#000;">177.38</div><div class="a" style="left:901px;top:393px;width:44px;height:13px;background:rgb(242, 155, 124)"></div><div class="t" style="right:422px;top:394.19px;font-size:11px;color:#000;">202.95</div><div class="a" style="left:947px;top:393px;width:44px;height:13px;background:rgb(242, 155, 124)"></div><div class="t" style="right:376px;top:394.19px;font-size:11px;color:#000;">233.07</div><div class="a" style="left:993px;top:393px;width:44px;height:13px;background:rgb(242, 155, 124)"></div><div class="t" style="right:330px;top:394.19px;font-size:11px;color:#000;">260.89</div><div class="a" style="left:1039px;top:393px;width:44px;height:13px;background:rgb(242, 155, 124)"></div><div class="t" style="right:284px;top:394.19px;font-size:11px;color:#000;">292.56</div><div class="a" style="left:1085px;top:393px;width:44px;height:13px;background:rgb(242, 155, 124)"></div><div class="t" style="right:238px;top:394.19px;font-size:11px;color:#000;">-314.62</div><div class="a" style="left:348px;top:407px;width:45px;height:14px;background:#f0f0f0;border:1px solid #a0a0a0;box-shadow:inset 1px 1px 0 #fff;box-sizing:border-box;"></div><div class="t" style="right:976px;top:409.69px;font-size:11px;color:#000;">6000</div><div class="a" style="left:395px;top:408px;width:44px;height:13px;background:rgb(207, 221, 193)"></div><div class="t" style="right:928px;top:409.19px;font-size:11px;color:#000;">22.40</div><div class="a" style="left:441px;top:408px;width:44px;height:13px;background:rgb(207, 221, 193)"></div><div class="t" style="right:882px;top:409.19px;font-size:11px;color:#000;">22.40</div><div class="a" style="left:487px;top:408px;width:44px;height:13px;background:rgb(207, 221, 193)"></div><div class="t" style="right:836px;top:409.19px;font-size:11px;color:#000;">22.40</div><div class="a" style="left:533px;top:408px;width:44px;height:13px;background:rgb(207, 221, 193)"></div><div class="t" style="right:790px;top:409.19px;font-size:11px;color:#000;">22.40</div><div class="a" style="left:579px;top:408px;width:44px;height:13px;background:rgb(207, 221, 193)"></div><div class="t" style="right:744px;top:409.19px;font-size:11px;color:#000;">22.40</div><div class="a" style="left:625px;top:408px;width:44px;height:13px;background:rgb(220, 203, 170)"></div><div class="t" style="right:698px;top:409.19px;font-size:11px;color:#000;">47.60</div><div class="a" style="left:671px;top:408px;width:44px;height:13px;background:rgb(231, 179, 148)"></div><div class="t" style="right:652px;top:409.19px;font-size:11px;color:#000;">72.80</div><div class="a" style="left:717px;top:408px;width:44px;height:13px;background:rgb(240, 157, 126)"></div><div class="t" style="right:606px;top:409.19px;font-size:11px;color:#000;">95.20</div><div class="a" style="left:763px;top:408px;width:44px;height:13px;background:rgb(242, 155, 124)"></div><div class="t" style="right:560px;top:409.19px;font-size:11px;color:#000;">120.40</div><div class="a" style="left:809px;top:408px;width:44px;height:13px;background:rgb(242, 155, 124)"></div><div class="t" style="right:514px;top:409.19px;font-size:11px;color:#000;">142.80</div><div class="a" style="left:855px;top:408px;width:44px;height:13px;background:rgb(242, 155, 124)"></div><div class="t" style="right:468px;top:409.19px;font-size:11px;color:#000;">177.83</div><div class="a" style="left:901px;top:408px;width:44px;height:13px;background:rgb(242, 155, 124)"></div><div class="t" style="right:422px;top:409.19px;font-size:11px;color:#000;">203.46</div><div class="a" style="left:947px;top:408px;width:44px;height:13px;background:rgb(242, 155, 124)"></div><div class="t" style="right:376px;top:409.19px;font-size:11px;color:#000;">233.71</div><div class="a" style="left:993px;top:408px;width:44px;height:13px;background:rgb(242, 155, 124)"></div><div class="t" style="right:330px;top:409.19px;font-size:11px;color:#000;">261.65</div><div class="a" style="left:1039px;top:408px;width:44px;height:13px;background:rgb(242, 155, 124)"></div><div class="t" style="right:284px;top:409.19px;font-size:11px;color:#000;">293.43</div><div class="a" style="left:1085px;top:408px;width:44px;height:13px;background:rgb(242, 155, 124)"></div><div class="t" style="right:238px;top:409.19px;font-size:11px;color:#000;">-313.49</div><div class="a" style="left:348px;top:422px;width:45px;height:14px;background:#f0f0f0;border:1px solid #a0a0a0;box-shadow:inset 1px 1px 0 #fff;box-sizing:border-box;"></div><div class="t" style="right:976px;top:424.69px;font-size:11px;color:#000;">6520</div><div class="a" style="left:395px;top:423px;width:44px;height:13px;background:rgb(211, 212, 181)"></div><div class="t" style="right:928px;top:424.19px;font-size:11px;color:#000;">33.60</div><div class="a" style="left:441px;top:423px;width:44px;height:13px;background:rgb(211, 212, 181)"></div><div class="t" style="right:882px;top:424.19px;font-size:11px;color:#000;">33.60</div><div class="a" style="left:487px;top:423px;width:44px;height:13px;background:rgb(211, 212, 181)"></div><div class="t" style="right:836px;top:424.19px;font-size:11px;color:#000;">33.60</div><div class="a" style="left:533px;top:423px;width:44px;height:13px;background:rgb(211, 212, 181)"></div><div class="t" style="right:790px;top:424.19px;font-size:11px;color:#000;">33.60</div><div class="a" style="left:579px;top:423px;width:44px;height:13px;background:rgb(211, 212, 181)"></div><div class="t" style="right:744px;top:424.19px;font-size:11px;color:#000;">33.60</div><div class="a" style="left:625px;top:423px;width:44px;height:13px;background:rgb(224, 195, 160)"></div><div class="t" style="right:698px;top:424.19px;font-size:11px;color:#000;">56.00</div><div class="a" style="left:671px;top:423px;width:44px;height:13px;background:rgb(234, 174, 142)"></div><div class="t" style="right:652px;top:424.19px;font-size:11px;color:#000;">81.20</div><div class="a" style="left:717px;top:423px;width:44px;height:13px;background:rgb(242, 155, 124)"></div><div class="t" style="right:606px;top:424.19px;font-size:11px;color:#000;">103.60</div><div class="a" style="left:763px;top:423px;width:44px;height:13px;background:rgb(242, 155, 124)"></div><div class="t" style="right:560px;top:424.19px;font-size:11px;color:#000;">128.80</div><div class="a" style="left:809px;top:423px;width:44px;height:13px;background:rgb(242, 155, 124)"></div><div class="t" style="right:514px;top:424.19px;font-size:11px;color:#000;">148.40</div><div class="a" style="left:855px;top:423px;width:44px;height:13px;background:rgb(242, 155, 124)"></div><div class="t" style="right:468px;top:424.19px;font-size:11px;color:#000;">184.15</div><div class="a" style="left:901px;top:423px;width:44px;height:13px;background:rgb(242, 155, 124)"></div><div class="t" style="right:422px;top:424.19px;font-size:11px;color:#000;">209.97</div><div class="a" style="left:947px;top:423px;width:44px;height:13px;background:rgb(242, 155, 124)"></div><div class="t" style="right:376px;top:424.19px;font-size:11px;color:#000;">240.42</div><div class="a" style="left:993px;top:423px;width:44px;height:13px;background:rgb(242, 155, 124)"></div><div class="t" style="right:330px;top:424.19px;font-size:11px;color:#000;">268.59</div><div class="a" style="left:1039px;top:423px;width:44px;height:13px;background:rgb(242, 155, 124)"></div><div class="t" style="right:284px;top:424.19px;font-size:11px;color:#000;">297.46</div><div class="a" style="left:1085px;top:423px;width:44px;height:13px;background:rgb(242, 155, 124)"></div><div class="t" style="right:238px;top:424.19px;font-size:11px;color:#000;">-312.40</div><div class="a" style="left:486px;top:212px;width:46px;height:15px;border:1px solid #202020;box-sizing:border-box"></div><div class="a" style="left:346px;top:522px;width:801px;height:24px;background:#f0f0f0;border-top:1px solid #fff;box-sizing:border-box"></div><div class="a" style="left:420px;top:524px;width:1px;height:21px;background:#dcdcdc"></div><div class="a" style="left:495px;top:524px;width:1px;height:21px;background:#dcdcdc"></div><div class="t" style="left:500px;top:530.84px;font-size:12px;color:#000;letter-spacing:-0.3px">Sel Count: 24, Min: 19.600, Max: 22.400, Avg: 20.950</div>
<!-- diff -->
<div class="a" style="left:747px;top:484px;width:619px;height:284px;background:#ebebeb;border-left:1px solid #d4d4d4;border-top:1px solid #d4d4d4;box-sizing:border-box"></div><div class="t" style="left:1058.5px;top:491.90px;font-size:15px;color:#333;letter-spacing:0.1px">Difference Tool</div><div class="a" style="left:754px;top:514px;width:612px;height:254px;background:#f0f0f0;border-left:1px solid #d5d5d5;border-top:1px solid #d5d5d5;box-sizing:border-box"></div><div class="t" style="left:765.5px;top:527.69px;font-size:11px;color:#000;letter-spacing:-0.12px">Find Differences Between</div><div class="a" style="left:895px;top:520px;width:140px;height:21px;background:linear-gradient(#f0f0f0,#e5e5e5);border:1px solid #acacac;box-sizing:border-box;overflow:hidden"><div style="position:absolute;left:4px;top:0;width:116px;height:19px;overflow:hidden"><div class="t" style="left:0;top:4.84px;font-size:12px;letter-spacing:-0.35px;color:#000">vonanfang0405flash- Kopie (1).bin</div></div></div><svg class="a" style="left:1020px;top:528px;" width="10" height="6" viewBox="0 0 10 6"><path d="M1 1 L5 5 L9 1" fill="none" stroke="#444" stroke-width="1.6"/></svg><div class="t" style="left:1042.6px;top:528.19px;font-size:11px;color:#000;letter-spacing:0.3px">and</div><div class="a" style="left:1069px;top:520px;width:140px;height:21px;background:linear-gradient(#f0f0f0,#e5e5e5);border:1px solid #acacac;box-sizing:border-box;overflow:hidden"><div style="position:absolute;left:4px;top:0;width:119px;height:19px;overflow:hidden"><div class="t" style="left:0;top:4.84px;font-size:12px;letter-spacing:-0.35px;color:#000">2pecloaexxxxxalpinanewWBAWB71060PR43400</div></div></div><svg class="a" style="left:1194px;top:528px;" width="10" height="6" viewBox="0 0 10 6"><path d="M1 1 L5 5 L9 1" fill="none" stroke="#444" stroke-width="1.6"/></svg><div class="a" style="left:1218px;top:521px;width:73px;height:18px;background:linear-gradient(#f0f0f0,#e5e5e5);border:1px solid #acacac;box-sizing:border-box"></div><div class="t" style="left:1254.5px;transform:translateX(-50%);top:524.69px;font-size:11px;color:#000;letter-spacing:0px">Search</div><div class="a" style="left:766px;top:549px;width:13px;height:13px;background:#fff;border:1px solid #707070;box-sizing:border-box"></div><div class="t" style="left:781.3px;top:550.29px;font-size:11px;color:#000;letter-spacing:-0.14px">Limit search to defined items only</div><div class="t" style="left:972.5px;top:552.19px;font-size:11px;color:#000;letter-spacing:-0.03px">Start Address (Hex)</div><div class="a" style="left:1070px;top:544px;width:48px;height:20px;background:#fff;border:1px solid #abadb3;box-sizing:border-box"></div><div class="t" style="left:1075px;top:549.19px;font-size:11px;color:#000;">0000</div><div class="t" style="left:1136px;top:552.49px;font-size:11px;color:#000;">End</div><div class="a" style="left:1160px;top:544px;width:48px;height:20px;background:#fff;border:1px solid #abadb3;box-sizing:border-box"></div><div class="t" style="left:1166px;top:549.19px;font-size:11px;color:#000;letter-spacing:-0.2px">1FFFFF</div><div class="a" style="left:1218px;top:545px;width:73px;height:18px;background:linear-gradient(#f0f0f0,#e5e5e5);border:1px solid #acacac;box-sizing:border-box"></div><div class="t" style="left:1254.5px;transform:translateX(-50%);top:548.69px;font-size:11px;color:#000;letter-spacing:0px">Close</div><div class="t" style="left:765.9px;top:580.99px;font-size:11px;color:#000;">4208 Bytes Different</div><div class="a" style="left:905px;top:568px;width:181px;height:21px;background:linear-gradient(#f0f0f0,#e5e5e5);border:1px solid #acacac;box-sizing:border-box"></div><div class="t" style="left:995.5px;transform:translateX(-50%);top:573.19px;font-size:11px;color:#000;letter-spacing:-0.08px">Copy Selections from Right to Left</div><div class="a" style="left:1110px;top:568px;width:181px;height:21px;background:linear-gradient(#f0f0f0,#e5e5e5);border:1px solid #acacac;box-sizing:border-box"></div><div class="t" style="left:1200.5px;transform:translateX(-50%);top:573.19px;font-size:11px;color:#000;letter-spacing:-0.08px">Copy Selections from Left to Right</div><div class="a" style="left:766px;top:593px;width:600px;height:175px;background:#fff;border-left:1px solid #828790;border-top:1px solid #828790;box-sizing:border-box"></div><div class="a" style="left:767px;top:594px;width:599px;height:24px;background:#fafafa"></div><div class="a" style="left:767px;top:618px;width:599px;height:1px;background:#e5eefa"></div><div class="a" style="left:820px;top:595px;width:1px;height:23px;background:#e5eefa"></div><div class="a" style="left:1160px;top:595px;width:1px;height:23px;background:#e5eefa"></div><div class="a" style="left:1220px;top:595px;width:1px;height:23px;background:#e5eefa"></div><div class="a" style="left:1280px;top:595px;width:1px;height:23px;background:#e5eefa"></div><div class="t" style="left:773.8px;top:601.99px;font-size:11px;color:#000;letter-spacing:-0.25px">Address</div><div class="t" style="left:826.4px;top:601.99px;font-size:11px;color:#000;letter-spacing:-0.1px">Item Title</div><div class="t" style="left:1166.7px;top:601.99px;font-size:11px;color:#000;letter-spacing:-0.1px">vonanf…</div><div class="t" style="left:1227px;top:601.99px;font-size:11px;color:#000;letter-spacing:-0.2px">2peclo…</div><div class="a" style="left:767px;top:635px;width:599px;height:1px;background:#f0f0f0"></div><div class="a" style="left:820px;top:619px;width:1px;height:17px;background:#f0f0f0"></div><div class="a" style="left:1160px;top:619px;width:1px;height:17px;background:#f0f0f0"></div><div class="a" style="left:1220px;top:619px;width:1px;height:17px;background:#f0f0f0"></div><div class="a" style="left:1280px;top:619px;width:1px;height:17px;background:#f0f0f0"></div><div class="t" style="left:773.8px;top:622.69px;font-size:11px;color:#0000ee;letter-spacing:-0.4px">620CD</div><div class="t" style="left:826.4px;top:622.69px;font-size:11px;color:#0000ee;letter-spacing:-0.05px">Item Not Defined</div><div class="t" style="left:1166.7px;top:622.69px;font-size:11px;color:#0000ee;">9E</div><div class="t" style="left:1227px;top:622.69px;font-size:11px;color:#0000ee;">87</div><div class="a" style="left:767px;top:652px;width:599px;height:1px;background:#f0f0f0"></div><div class="a" style="left:820px;top:636px;width:1px;height:17px;background:#f0f0f0"></div><div class="a" style="left:1160px;top:636px;width:1px;height:17px;background:#f0f0f0"></div><div class="a" style="left:1220px;top:636px;width:1px;height:17px;background:#f0f0f0"></div><div class="a" style="left:1280px;top:636px;width:1px;height:17px;background:#f0f0f0"></div><div class="t" style="left:773.8px;top:639.69px;font-size:11px;color:#0000ee;letter-spacing:-0.4px">620D4</div><div class="t" style="left:826.4px;top:639.69px;font-size:11px;color:#0000ee;letter-spacing:-0.05px">Item Not Defined</div><div class="t" style="left:1166.7px;top:639.69px;font-size:11px;color:#0000ee;">A5</div><div class="t" style="left:1227px;top:639.69px;font-size:11px;color:#0000ee;">26</div><div class="a" style="left:767px;top:669px;width:599px;height:1px;background:#f0f0f0"></div><div class="a" style="left:820px;top:653px;width:1px;height:17px;background:#f0f0f0"></div><div class="a" style="left:1160px;top:653px;width:1px;height:17px;background:#f0f0f0"></div><div class="a" style="left:1220px;top:653px;width:1px;height:17px;background:#f0f0f0"></div><div class="a" style="left:1280px;top:653px;width:1px;height:17px;background:#f0f0f0"></div><div class="t" style="left:773.8px;top:656.69px;font-size:11px;color:#0000ee;letter-spacing:-0.4px">620D5</div><div class="t" style="left:826.4px;top:656.69px;font-size:11px;color:#0000ee;letter-spacing:-0.05px">Item Not Defined</div><div class="t" style="left:1166.7px;top:656.69px;font-size:11px;color:#0000ee;">64</div><div class="t" style="left:1227px;top:656.69px;font-size:11px;color:#0000ee;">54</div><div class="a" style="left:767px;top:686px;width:599px;height:1px;background:#f0f0f0"></div><div class="a" style="left:820px;top:670px;width:1px;height:17px;background:#f0f0f0"></div><div class="a" style="left:1160px;top:670px;width:1px;height:17px;background:#f0f0f0"></div><div class="a" style="left:1220px;top:670px;width:1px;height:17px;background:#f0f0f0"></div><div class="a" style="left:1280px;top:670px;width:1px;height:17px;background:#f0f0f0"></div><div class="t" style="left:773.8px;top:673.69px;font-size:11px;color:#0000ee;letter-spacing:-0.4px">620D6</div><div class="t" style="left:826.4px;top:673.69px;font-size:11px;color:#0000ee;letter-spacing:-0.05px">Item Not Defined</div><div class="t" style="left:1166.7px;top:673.69px;font-size:11px;color:#0000ee;">31</div><div class="t" style="left:1227px;top:673.69px;font-size:11px;color:#0000ee;">A5</div><div class="a" style="left:767px;top:703px;width:599px;height:1px;background:#f0f0f0"></div><div class="a" style="left:820px;top:687px;width:1px;height:17px;background:#f0f0f0"></div><div class="a" style="left:1160px;top:687px;width:1px;height:17px;background:#f0f0f0"></div><div class="a" style="left:1220px;top:687px;width:1px;height:17px;background:#f0f0f0"></div><div class="a" style="left:1280px;top:687px;width:1px;height:17px;background:#f0f0f0"></div><div class="t" style="left:773.8px;top:690.69px;font-size:11px;color:#0000ee;letter-spacing:-0.4px">620D7</div><div class="t" style="left:826.4px;top:690.69px;font-size:11px;color:#0000ee;letter-spacing:-0.05px">Item Not Defined</div><div class="t" style="left:1166.7px;top:690.69px;font-size:11px;color:#0000ee;">70</div><div class="t" style="left:1227px;top:690.69px;font-size:11px;color:#0000ee;">64</div><div class="a" style="left:767px;top:720px;width:599px;height:1px;background:#f0f0f0"></div><div class="a" style="left:820px;top:704px;width:1px;height:17px;background:#f0f0f0"></div><div class="a" style="left:1160px;top:704px;width:1px;height:17px;background:#f0f0f0"></div><div class="a" style="left:1220px;top:704px;width:1px;height:17px;background:#f0f0f0"></div><div class="a" style="left:1280px;top:704px;width:1px;height:17px;background:#f0f0f0"></div><div class="t" style="left:773.8px;top:707.69px;font-size:11px;color:#0000ee;letter-spacing:-0.4px">620D8</div><div class="t" style="left:826.4px;top:707.69px;font-size:11px;color:#0000ee;letter-spacing:-0.05px">Item Not Defined</div><div class="t" style="left:1166.7px;top:707.69px;font-size:11px;color:#0000ee;">64</div><div class="t" style="left:1227px;top:707.69px;font-size:11px;color:#0000ee;">31</div><div class="a" style="left:767px;top:737px;width:599px;height:1px;background:#f0f0f0"></div><div class="a" style="left:820px;top:721px;width:1px;height:17px;background:#f0f0f0"></div><div class="a" style="left:1160px;top:721px;width:1px;height:17px;background:#f0f0f0"></div><div class="a" style="left:1220px;top:721px;width:1px;height:17px;background:#f0f0f0"></div><div class="a" style="left:1280px;top:721px;width:1px;height:17px;background:#f0f0f0"></div><div class="t" style="left:773.8px;top:724.69px;font-size:11px;color:#0000ee;letter-spacing:-0.4px">620D9</div><div class="t" style="left:826.4px;top:724.69px;font-size:11px;color:#0000ee;letter-spacing:-0.05px">Item Not Defined</div><div class="t" style="left:1166.7px;top:724.69px;font-size:11px;color:#0000ee;">7D</div><div class="t" style="left:1227px;top:724.69px;font-size:11px;color:#0000ee;">70</div><div class="a" style="left:767px;top:754px;width:599px;height:1px;background:#f0f0f0"></div><div class="a" style="left:820px;top:738px;width:1px;height:17px;background:#f0f0f0"></div><div class="a" style="left:1160px;top:738px;width:1px;height:17px;background:#f0f0f0"></div><div class="a" style="left:1220px;top:738px;width:1px;height:17px;background:#f0f0f0"></div><div class="a" style="left:1280px;top:738px;width:1px;height:17px;background:#f0f0f0"></div><div class="t" style="left:773.8px;top:741.69px;font-size:11px;color:#0000ee;letter-spacing:-0.4px">620DA</div><div class="t" style="left:826.4px;top:741.69px;font-size:11px;color:#0000ee;letter-spacing:-0.05px">Item Not Defined</div><div class="t" style="left:1166.7px;top:741.69px;font-size:11px;color:#0000ee;">10</div><div class="t" style="left:1227px;top:741.69px;font-size:11px;color:#0000ee;">64</div><div class="a" style="left:767px;top:771px;width:599px;height:1px;background:#f0f0f0"></div><div class="a" style="left:820px;top:755px;width:1px;height:17px;background:#f0f0f0"></div><div class="a" style="left:1160px;top:755px;width:1px;height:17px;background:#f0f0f0"></div><div class="a" style="left:1220px;top:755px;width:1px;height:17px;background:#f0f0f0"></div><div class="a" style="left:1280px;top:755px;width:1px;height:17px;background:#f0f0f0"></div><div class="t" style="left:773.8px;top:758.69px;font-size:11px;color:#0000ee;letter-spacing:-0.4px">620DB</div><div class="t" style="left:826.4px;top:758.69px;font-size:11px;color:#0000ee;letter-spacing:-0.05px">Item Not Defined</div><div class="t" style="left:1166.7px;top:758.69px;font-size:11px;color:#0000ee;">88</div><div class="t" style="left:1227px;top:758.69px;font-size:11px;color:#0000ee;">7D</div>
<!-- taskbar -->
<div class="a" style="left:0px;top:728px;width:747px;height:40px;background:radial-gradient(ellipse 50px 12px at 25px 10px, rgba(158,142,130,0.8), transparent),radial-gradient(ellipse 40px 10px at 15px 34px, rgba(155,140,130,0.7), transparent),radial-gradient(ellipse 30px 16px at 110px 17px, rgba(150,138,130,0.6), transparent),radial-gradient(ellipse 45px 12px at 215px 10px, rgba(160,145,135,0.7), transparent),radial-gradient(ellipse 40px 10px at 230px 34px, rgba(155,142,134,0.6), transparent),radial-gradient(ellipse 50px 12px at 300px 10px, rgba(158,144,134,0.7), transparent),radial-gradient(ellipse 40px 10px at 280px 34px, rgba(155,142,134,0.6), transparent),radial-gradient(ellipse 40px 12px at 410px 12px, rgba(160,146,136,0.65), transparent),radial-gradient(ellipse 35px 12px at 520px 14px, rgba(150,140,134,0.5), transparent),radial-gradient(ellipse 45px 22px at 725px 20px, rgba(165,150,140,0.8), transparent),radial-gradient(ellipse 45px 10px at 650px 34px, rgba(158,144,134,0.7), transparent),radial-gradient(ellipse 25px 12px at 600px 17px, rgba(152,142,136,0.5), transparent),radial-gradient(ellipse 25px 14px at 75px 24px, rgba(100,104,118,0.45), transparent),radial-gradient(ellipse 30px 14px at 175px 26px, rgba(100,104,118,0.45), transparent),radial-gradient(ellipse 35px 16px at 365px 24px, rgba(100,104,118,0.5), transparent),radial-gradient(ellipse 35px 14px at 470px 24px, rgba(100,104,118,0.45), transparent),radial-gradient(ellipse 35px 12px at 660px 12px, rgba(95,100,116,0.6), transparent),linear-gradient(90deg,#7e7a7a,#78777b 30%,#7a787b 60%,#847e7c)"></div><div class="a" style="left:0px;top:728px;width:747px;height:1px;background:rgba(60,60,60,0.35)"></div><div class="a" style="left:747px;top:728px;width:619px;height:40px;background:linear-gradient(rgba(170,170,170,0.62),rgba(158,158,158,0.64))"></div><div class="a" style="left:122px;top:729px;width:58px;height:39px;background:rgba(255,255,255,0.12);border:1px solid rgba(255,255,255,0.45);box-sizing:border-box"></div><div class="a" style="left:432px;top:729px;width:58px;height:39px;background:rgba(255,255,255,0.12);border:1px solid rgba(255,255,255,0.45);box-sizing:border-box"></div><div class="a" style="left:494px;top:729px;width:58px;height:39px;background:rgba(255,255,255,0.33);border:1px solid rgba(255,255,255,0.85);box-sizing:border-box"></div><div class="a" style="left:556px;top:729px;width:58px;height:39px;background:rgba(255,255,255,0.12);border:1px solid rgba(255,255,255,0.45);box-sizing:border-box"></div><svg class="a" style="left:8px;top:729px;" width="38" height="38" viewBox="0 0 38 38"><defs><radialGradient id="sg" cx="0.5" cy="0.3" r="0.75"><stop offset="0" stop-color="#5aa0aa"/><stop offset="0.6" stop-color="#22606e"/><stop offset="1" stop-color="#0c3a4a"/></radialGradient></defs><circle cx="19" cy="19" r="18" fill="url(#sg)" stroke="#c8e6ec" stroke-width="1"/><circle cx="29.96" cy="18.04" r="2.3" fill="#2d8794" stroke="#f2c32a" stroke-width="1.3"/><circle cx="28.33" cy="13.17" r="2.3" fill="#2d8794" stroke="#f2c32a" stroke-width="1.3"/><circle cx="24.67" cy="9.57" r="2.3" fill="#2d8794" stroke="#f2c32a" stroke-width="1.3"/><circle cx="19.00" cy="8.00" r="2.3" fill="#2d8794" stroke="#f2c32a" stroke-width="1.3"/><circle cx="13.33" cy="9.57" r="2.3" fill="#2d8794" stroke="#f2c32a" stroke-width="1.3"/><circle cx="9.67" cy="13.17" r="2.3" fill="#2d8794" stroke="#f2c32a" stroke-width="1.3"/><circle cx="8.04" cy="18.04" r="2.3" fill="#2d8794" stroke="#f2c32a" stroke-width="1.3"/><path d="M13 29 L8.5 21 C7.5 12 12 8 19 8 C26 8 30.5 12 29.5 21 L25 29Z" fill="#2d8794" stroke="#f2d030" stroke-width="1.5"/><path d="M12 23 C14 16 24 16 26 23 M14 26 C16 20 22 20 24 26 M16 28 C17 25 21 25 22 28" stroke="#78c4cc" stroke-width="1.2" fill="none"/></svg><svg class="a" style="left:74px;top:733px;" width="30" height="30" viewBox="0 0 30 30"><defs><radialGradient id="fg" cx="0.6" cy="0.35" r="0.6"><stop offset="0" stop-color="#4ab0f0"/><stop offset="1" stop-color="#1c4fa8"/></radialGradient><linearGradient id="fo" x1="0" y1="0" x2="0.3" y2="1"><stop offset="0" stop-color="#f58a1e"/><stop offset="1" stop-color="#e0401c"/></linearGradient></defs><circle cx="15.5" cy="15" r="14.5" fill="url(#fo)"/><circle cx="17" cy="12.5" r="9.5" fill="url(#fg)"/><path d="M2 10 C1 22 12 30 21 27 C14 26 8 22 9 15 C10 11 14 10 16 12 C14 8 10 6 6 8 C5 6 4 4 3 3Z" fill="#f07818"/><path d="M9 16 C12 22 20 22 24 17 C22 23 14 25 10 20Z" fill="#e8501a"/><path d="M25 4 C31 9 31 19 26 25 C28 18 28 11 25 4Z" fill="#f8d040"/></svg><svg class="a" style="left:135px;top:735px;" width="32" height="30" viewBox="0 0 32 30"><rect x="3" y="1" width="12" height="5" fill="#f0dc90" stroke="#c8a850" stroke-width="0.6"/><rect x="5" y="2" width="3" height="2" fill="#20b020"/><rect x="10" y="4" width="12" height="5" fill="#f0dc90" stroke="#c8a850" stroke-width="0.6"/><rect x="12" y="5" width="3" height="2" fill="#d02020"/><rect x="17" y="6" width="12" height="5" fill="#f0dc90" stroke="#c8a850" stroke-width="0.6"/><rect x="19" y="7" width="3" height="2" fill="#2080e0"/><rect x="1" y="9" width="29" height="18" fill="#f5de8a" stroke="#c8a850" stroke-width="0.8"/><path d="M4 29 V18 H28 V29 H21 V23 H11 V29Z" fill="#8ccbf0" stroke="#3a90d0" stroke-width="1"/></svg><svg class="a" style="left:197px;top:735px;" width="28" height="28" viewBox="0 0 28 28"><rect x="6" y="1" width="20" height="24" fill="#aad6f2" stroke="#5aa8e0"/><rect x="3" y="1" width="20" height="24" fill="#bfe0f6" stroke="#5aa8e0"/><rect x="0.5" y="1" width="21" height="24" fill="#a8d4f0" stroke="#5aa8e0"/><circle cx="11" cy="13" r="8.5" fill="#f07818" stroke="#d05a10"/><path d="M8 8 L16 13 L8 18Z" fill="#fff"/></svg><div class="a" style="left:260px;top:733px;width:30px;height:30px;background:#008a00"></div><svg class="a" style="left:263px;top:735px;" width="24" height="24" viewBox="0 0 24 24"><path d="M9 6 C9 2 15 2 15 6" stroke="#fff" stroke-width="1.5" fill="none"/><path d="M3 7 L21 6 L21 19 L4 20Z" fill="#fff"/><rect x="8" y="9" width="4" height="4" fill="#008a00"/><rect x="13" y="9" width="4" height="4" fill="#008a00"/><rect x="8" y="14" width="4" height="4" fill="#008a00"/><rect x="13" y="14" width="4" height="4" fill="#008a00"/></svg><svg class="a" style="left:320px;top:734px;" width="32" height="30" viewBox="0 0 32 30"><path d="M10 2 L30 6 L28 24 L12 22Z" fill="#7cc860"/><path d="M6 5 L26 8 L25 26 L8 24Z" fill="#f0a040"/><rect x="3" y="9" width="22" height="18" fill="#d8ecfa" stroke="#5aa8e0"/><rect x="18" y="11" width="5" height="4" fill="#d04020"/><rect x="7" y="19" width="12" height="4" fill="#fff"/><path d="M0 27 C8 30 18 24 30 27" stroke="#f0c040" stroke-width="2" fill="none"/></svg><div class="a" style="left:385px;top:735px;width:26px;height:26px;background:#101418"></div><svg class="a" style="left:385px;top:735px;" width="26" height="26" viewBox="0 0 26 26"><rect x="2" y="2" width="6" height="5" fill="#707070"/><rect x="10" y="2" width="6" height="5" fill="#808080" stroke="#40b0f0"/><rect x="18" y="2" width="6" height="5" fill="#707070"/><rect x="2" y="10" width="6" height="5" fill="#606060"/><rect x="18" y="10" width="6" height="5" fill="#606060"/><path d="M12 7 V18 C10 17 9 18 10 20 L13 25 H21 L22 17 C22 15 19 14 15 14 V7 C15 5 12 5 12 7Z" fill="#fff"/></svg><svg class="a" style="left:446px;top:733px;" width="30" height="30" viewBox="0 0 30 30"><circle cx="15" cy="15" r="14.5" fill="#db4437"/><path d="M15 15 L27.6 7.7 A14.5 14.5 0 0 1 8.2 27.8Z" fill="#f4c20d"/><path d="M15 15 L8.2 27.8 A14.5 14.5 0 0 1 2.4 7.7Z" fill="#0f9d58"/><circle cx="15" cy="15" r="6.3" fill="#fff"/><circle cx="15" cy="15" r="4.8" fill="#4285f4"/></svg><svg class="a" style="left:506px;top:737px;" width="34" height="22" viewBox="0 0 34 22"><g transform="rotate(-15 17 11)"><rect x="3" y="6" width="28" height="8" fill="#000"/><rect x="5.0" y="4.5" width="2.4" height="2" fill="#000"/><rect x="9.8" y="4.5" width="2.4" height="2" fill="#000"/><rect x="14.6" y="4.5" width="2.4" height="2" fill="#000"/><rect x="19.4" y="4.5" width="2.4" height="2" fill="#000"/><rect x="24.2" y="4.5" width="2.4" height="2" fill="#000"/><rect x="29.0" y="4.5" width="2.4" height="2" fill="#000"/><rect x="9.0" y="13" width="2.6" height="5.5" fill="#fff" stroke="#000" stroke-width="0.9"/><rect x="13.4" y="13" width="2.6" height="5.5" fill="#fff" stroke="#000" stroke-width="0.9"/><rect x="17.8" y="13" width="2.6" height="5.5" fill="#fff" stroke="#000" stroke-width="0.9"/><rect x="22.2" y="13" width="2.6" height="5.5" fill="#fff" stroke="#000" stroke-width="0.9"/><rect x="26.6" y="13" width="2.6" height="5.5" fill="#fff" stroke="#000" stroke-width="0.9"/><rect x="2" y="13" width="5" height="2.5" fill="#fff" stroke="#000" stroke-width="0.6"/></g></svg><svg class="a" style="left:567px;top:732px;" width="36" height="34" viewBox="0 0 36 34"><path d="M3 20 C0 11 9 5 19 6 C27 7 29 13 24 17 C20 20 25 23 21 27 C15 32 5 29 3 20Z" fill="#cde6f8" stroke="#5aa4dc" stroke-width="1.2"/><circle cx="8" cy="18" r="2.6" fill="#e03a30"/><circle cx="12.5" cy="12.5" r="2.6" fill="#3cb040"/><circle cx="19" cy="10" r="2.6" fill="#f4a800"/><circle cx="15.5" cy="19.5" r="2.2" fill="#9cc8e8" stroke="#5aa4dc" stroke-width="0.8"/><path d="M17 32 L30 8" stroke="#e07a18" stroke-width="2.6" stroke-linecap="round"/><path d="M28 9 L30 1.5 C33 1 35 3 34 6Z" fill="#d8a868"/></svg><svg class="a" style="left:1007px;top:741px;" width="16" height="16" viewBox="0 0 16 16"><circle cx="8" cy="8" r="7" fill="#eee" stroke="#111" stroke-width="1.8"/><circle cx="8" cy="8.5" r="4" fill="none" stroke="#111" stroke-width="1.5"/><circle cx="8.5" cy="9" r="1.3" fill="#111"/></svg><svg class="a" style="left:1031px;top:741px;" width="16" height="16" viewBox="0 0 16 16"><path d="M1 10 L8 13 L15 10 L15 12 L8 15 L1 12Z" fill="#2a6ad8"/><path d="M1 8 L8 11 L15 8 L15 10 L8 13 L1 10Z" fill="#e8c020"/><path d="M1 6 L8 9 L15 6 L15 8 L8 11 L1 8Z" fill="#d03030"/><path d="M1 6 L8 2 L15 6 L8 9Z" fill="#70c040"/></svg><svg class="a" style="left:1055px;top:741px;" width="16" height="16" viewBox="0 0 16 16"><rect x="2" y="1" width="2" height="6" fill="#333"/><rect x="5" y="1" width="2" height="6" fill="#333"/><rect x="1" y="6" width="7" height="4" fill="#333"/><rect x="4" y="10" width="2" height="5" fill="#333"/><rect x="8.5" y="2.5" width="6" height="12" fill="#999" stroke="#444"/><path d="M9 9 L15 15 M15 9 L9 15" stroke="#d02020" stroke-width="1.8"/></svg><svg class="a" style="left:1078px;top:741px;" width="16" height="16" viewBox="0 0 16 16"><path d="M2 6 H5 L9 2 V14 L5 10 H2Z" fill="#fff" stroke="#444" stroke-width="1.1"/><path d="M11 5 C12.5 6.5 12.5 9.5 11 11 M13 3 C15.5 6 15.5 10 13 13" stroke="#444" stroke-width="1.1" fill="none"/></svg><svg class="a" style="left:1103px;top:741px;" width="16" height="16" viewBox="0 0 16 16"><rect x="1.5" y="2.5" width="5.5" height="5" fill="#fff" stroke="#555" stroke-width="0.9"/><rect x="8.5" y="1.5" width="6" height="6" fill="#fff" stroke="#555" stroke-width="0.9"/><rect x="1.5" y="8.5" width="5.5" height="5" fill="#fff" stroke="#555" stroke-width="0.9"/><rect x="8.5" y="8.5" width="6" height="6" fill="#fff" stroke="#555" stroke-width="0.9"/></svg><svg class="a" style="left:1126px;top:741px;" width="16" height="16" viewBox="0 0 16 16"><rect x="0.5" y="0.5" width="15" height="15" rx="1.5" fill="#3a96e0" stroke="#1a5aa0"/><path d="M4 3 L8 7 M8 3 L4 7" stroke="#fff" stroke-width="1"/><rect x="3" y="2.5" width="7" height="5" fill="none" stroke="#fff" stroke-width="0.8"/><path d="M6 10 H13 M6 12.5 H12" stroke="#fff" stroke-width="1"/><rect x="0.5" y="11" width="4" height="4.5" fill="#f0c020"/></svg><svg class="a" style="left:1151px;top:741px;" width="16" height="16" viewBox="0 0 16 16"><path d="M2 1 V15" stroke="#444" stroke-width="1.5"/><path d="M3 2 H12 L10 5 L12 8 H3Z" fill="#fff" stroke="#666" stroke-width="0.8"/><circle cx="11.5" cy="11.5" r="4.3" fill="#e02020" stroke="#fff" stroke-width="0.8"/><path d="M9.5 9.5 L13.5 13.5 M13.5 9.5 L9.5 13.5" stroke="#fff" stroke-width="1.3"/></svg><svg class="a" style="left:1175px;top:741px;" width="16" height="16" viewBox="0 0 16 16"><circle cx="8" cy="8" r="7.5" fill="#e0102a"/><circle cx="8" cy="9" r="3" fill="none" stroke="#fff" stroke-width="2"/><path d="M5 2 V9" stroke="#fff" stroke-width="2"/></svg><svg class="a" style="left:1199px;top:741px;" width="16" height="16" viewBox="0 0 16 16"><rect x="1" y="11" width="2" height="3" fill="#fff" stroke="#444" stroke-width="0.8"/><rect x="4.5" y="9" width="2" height="5" fill="#fff" stroke="#444" stroke-width="0.8"/><rect x="8" y="6.5" width="2" height="7.5" fill="#fff" stroke="#444" stroke-width="0.8"/><rect x="11.5" y="3.5" width="2.5" height="10.5" fill="#fff" stroke="#444" stroke-width="0.8"/></svg><svg class="a" style="left:1223px;top:741px;" width="16" height="16" viewBox="0 0 16 16"><rect x="1" y="3" width="15" height="11" fill="#6cb030" opacity="0.85"/><path d="M2 9 C5 4 11 4 15 9 C11 13 5 13 2 9Z" fill="none" stroke="#2a5a10" stroke-width="1"/><circle cx="8.5" cy="8.5" r="2" fill="#2a5a10"/></svg><div class="t" style="left:1254px;top:743.69px;font-size:11px;color:#fff;letter-spacing:0.2px">DEU</div><div class="t" style="left:1320px;transform:translateX(-50%);top:735.27px;font-size:11.5px;color:#fff;">20:03</div><div class="t" style="left:1320px;transform:translateX(-50%);top:752.27px;font-size:11.5px;color:#fff;">05.05.2016</div>

</body></html>
